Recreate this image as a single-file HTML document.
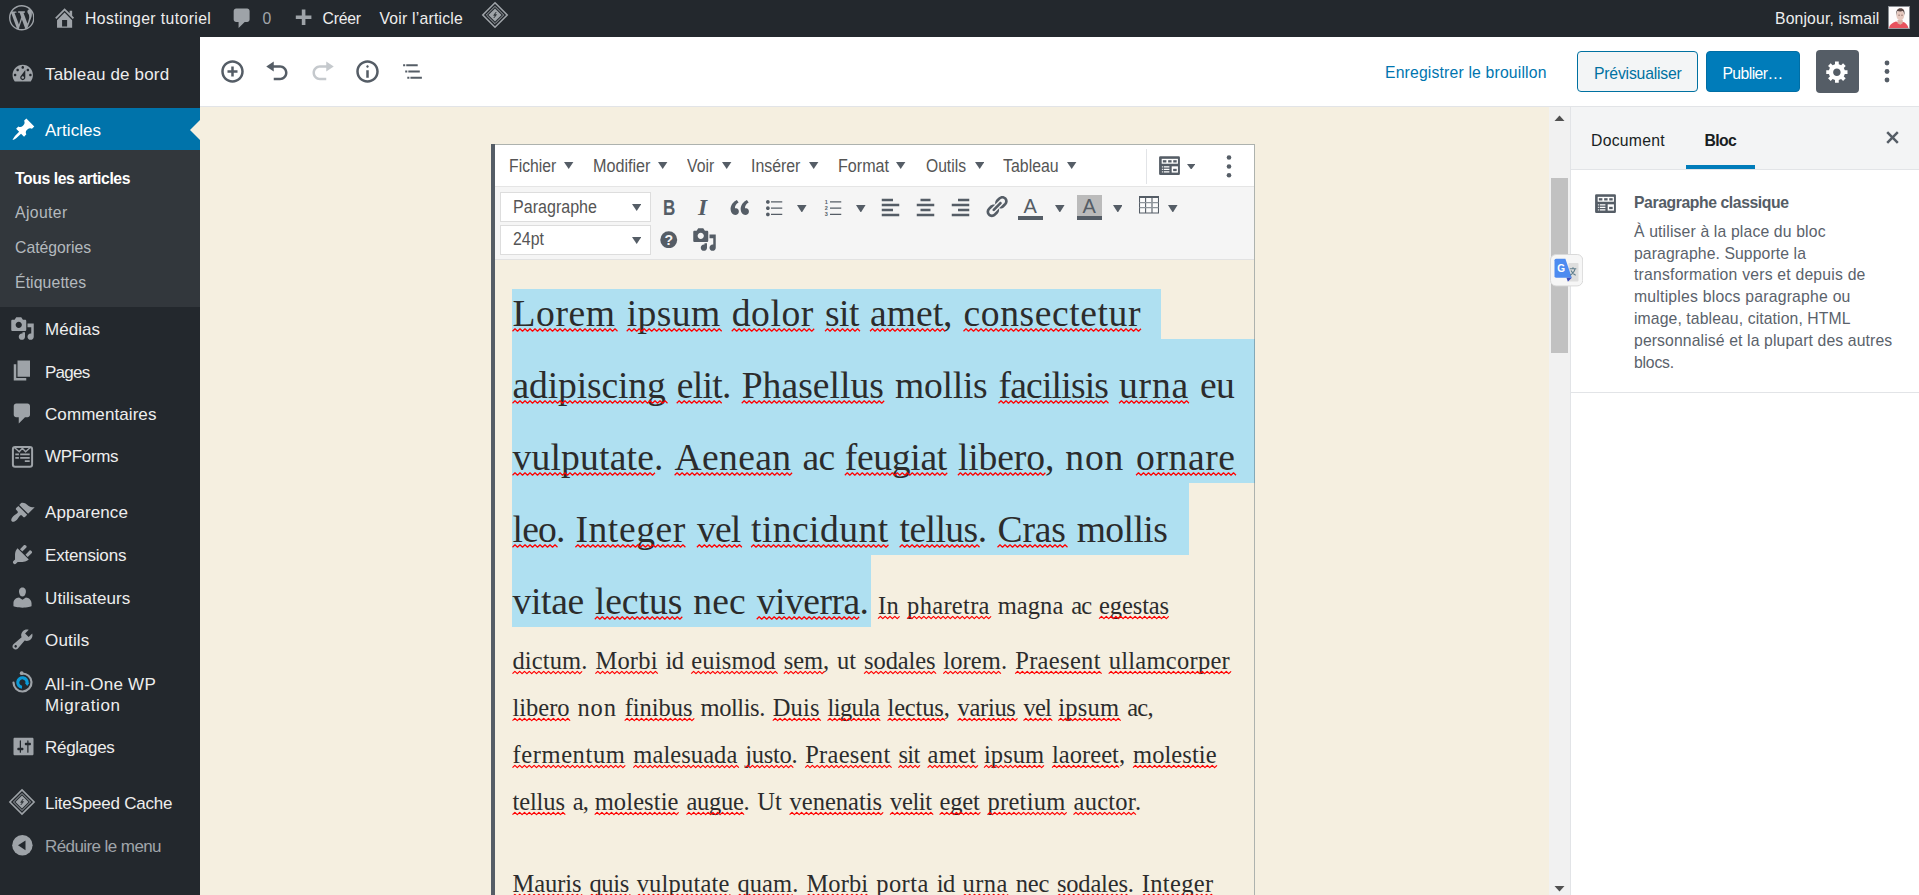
<!DOCTYPE html>
<html lang="fr"><head><meta charset="utf-8"><title>Modifier l’article ‹ Hostinger tutoriel — WordPress</title>
<style>
*{box-sizing:border-box;margin:0;padding:0}
html,body{width:1919px;height:895px;overflow:hidden;background:#f5efe0;font-family:"Liberation Sans",sans-serif}
.a{position:absolute;display:block}
.t{position:absolute;white-space:nowrap;line-height:1;font-size:16.25px}
.sq{text-decoration:none}

</style></head>
<body>
<div class="a" style="left:200px;top:107px;width:1350px;height:788px;background:#f5efe0;"></div>
<div class="a" style="left:0px;top:0px;width:1919px;height:37px;background:#23282d;"></div>
<svg class="a" style="left:8.5px;top:5px" width="25.5" height="25.5" viewBox="0 0 20 20"><path d="M20 10c0-5.51-4.49-10-10-10C4.48 0 0 4.49 0 10c0 5.52 4.48 10 10 10 5.51 0 10-4.48 10-10zM7.78 15.37L4.37 6.22c.55-.02 1.17-.08 1.17-.08.5-.06.44-1.13-.06-1.11 0 0-1.45.11-2.37.11-.18 0-.37 0-.58-.01C4.12 2.69 6.87 1.11 10 1.11c2.33 0 4.45.87 6.05 2.34-.68-.11-1.65.39-1.65 1.58 0 .74.45 1.36.9 2.1.35.61.55 1.36.55 2.46 0 1.49-1.4 5-1.4 5l-3.03-8.37c.54-.02.82-.17.82-.17.5-.05.44-1.25-.06-1.22 0 0-1.44.12-2.38.12-.87 0-2.33-.12-2.33-.12-.5-.03-.56 1.2-.06 1.22l.92.08 1.26 3.41zM17.41 10c.24-.64.74-1.87.43-4.25.7 1.29 1.05 2.71 1.05 4.25 0 3.29-1.73 6.24-4.4 7.78.97-2.59 1.94-5.2 2.92-7.78zM6.1 18.09C3.12 16.65 1.11 13.53 1.11 10c0-1.3.23-2.48.72-3.59C3.25 10.3 4.67 14.2 6.1 18.09zm4.03-6.63l2.58 6.98c-.86.29-1.76.45-2.71.45-.79 0-1.57-.11-2.29-.33.81-2.38 1.62-4.74 2.42-7.1z" fill="#9ea3a8"/></svg>
<svg class="a" style="left:52px;top:5px" width="25.2" height="25.2" viewBox="0 0 20 20"><path d="M16 8.5l1.53 1.53-1.06 1.06L10 4.62l-6.47 6.47-1.06-1.06L10 2.5l4 4v-2h2v4zm-6-2.46l6 5.99V18H4v-5.97zM12 17v-5H8v5h4z" fill="#9ea3a8"/></svg>
<svg class="a" style="left:229.5px;top:6px" width="24.5" height="24.5" viewBox="0 0 20 20"><path d="M5 2h9c1.1 0 2 .9 2 2v7c0 1.1-.9 2-2 2h-2l-5 5v-5H5c-1.1 0-2-.9-2-2V4c0-1.1.9-2 2-2z" fill="#9ea3a8"/></svg>
<svg class="a" style="left:291px;top:6.5px" width="24" height="24" viewBox="0 0 20 20"><path d="M17 7v3h-5v5H9v-5H4V7h5V2h3v5h5z" fill="#9ea3a8"/></svg>
<svg class="a" style="left:479.7px;top:0.40000000000000036px;" width="30" height="30" viewBox="-15 -15 30 30"><path d="M0 -12.2L12.2 0L0 12.2L-12.2 0Z" fill="none" stroke="#9ea3a8" stroke-width="1.6"/><path d="M0 -8.6L8.6 0L0 8.6L-8.6 0Z" fill="none" stroke="#9ea3a8" stroke-width="1"/><path d="M0 -6.6L6.6 0L0 6.6L-6.6 0Z" fill="#9ea3a8"/><path d="M1.2 -3L-1.4 0.4H0.6L-1.2 3L1.6 -0.4H-0.4Z" fill="#23282d" stroke="#23282d" stroke-width="0.5"/></svg>
<svg class="a" style="left:1888px;top:6px;" width="22" height="23.2" viewBox="0 0 22 23.200"><rect width="22" height="23.200" fill="#fdfcfc"/><path d="M1 22.200c.5-3.200 3.500-5.600 7-6.600l3.500 1.200l3-1c3 .8 5.200 3 6 6.400z" fill="#e8525d"/><path d="M9.500 14h5.200v3.200l-2.400 1.600l-2.800-1.600z" fill="#dbb3a6"/><ellipse cx="12.300" cy="9.300" rx="3.900" ry="5.100" fill="#e6c9bf"/><path d="M8.200 9.500c-.6-4.600 1.300-7.300 4.300-7.300s4.700 2.500 3.900 7.100c-.3-2.300-1-3.700-1.600-4.200c-1.500.5-3.700.5-5.200-.1c-.8.800-1.200 2.300-1.400 4.500z" fill="#5a4845"/><path d="M10.300 9.200h1.600M13.200 9.200h1.600" stroke="#7a5e58" stroke-width="0.800"/><rect x="0.500" y="0.500" width="21" height="22.200" fill="none" stroke="#8a8f94"/></svg>
<div class="a" style="left:0px;top:37px;width:200px;height:858px;background:#23282d;"></div>
<svg class="a" style="left:9.8px;top:60.8px" width="25.5" height="25.5" viewBox="0 0 20 20"><path d="M3.76 16h12.48c1.1-1.37 1.76-3.11 1.76-5 0-4.42-3.58-8-8-8s-8 3.58-8 8c0 1.89.66 3.63 1.76 5zM10 4c.55 0 1 .45 1 1s-.45 1-1 1-1-.45-1-1 .45-1 1-1zM6 6c.55 0 1 .45 1 1s-.45 1-1 1-1-.45-1-1 .45-1 1-1zm8 0c.55 0 1 .45 1 1s-.45 1-1 1-1-.45-1-1 .45-1 1-1zm-5.37 5.55L12 7v6c0 1.1-.9 2-2 2s-2-.9-2-2c0-.57.24-1.08.63-1.45zM4 10c.55 0 1 .45 1 1s-.45 1-1 1-1-.45-1-1 .45-1 1-1zm12 0c.55 0 1 .45 1 1s-.45 1-1 1-1-.45-1-1 .45-1 1-1zm-5 3c0-.55-.45-1-1-1s-1 .45-1 1 .45 1 1 1 1-.45 1-1z" fill="#9ea3a8"/></svg>
<div class="a" style="left:0px;top:108px;width:200px;height:42px;background:#0073aa;"></div>
<svg class="a" style="left:10.5px;top:117px" width="25" height="25" viewBox="0 0 20 20"><path d="M10.44 3.02l1.82-1.82 6.36 6.35-1.83 1.82c-1.05-.68-2.48-.57-3.41.36l-.75.75c-.92.93-1.04 2.35-.35 3.41l-1.83 1.82-2.41-2.41-2.8 2.79c-.42.42-3.38 2.71-3.8 2.29s1.86-3.39 2.28-3.81l2.79-2.79L4.1 9.36l1.83-1.82c1.05.69 2.48.57 3.4-.36l.75-.75c.93-.92 1.05-2.35.36-3.41z" fill="#fff"/></svg>
<svg class="a" style="left:190px;top:119.5px;" width="10" height="20" viewBox="0 0 10 20"><path d="M10 0L0 10L10 20Z" fill="#f5efe0"/></svg>
<div class="a" style="left:0px;top:150px;width:200px;height:157px;background:#32373c;"></div>
<svg class="a" style="left:10px;top:316px" width="25" height="25" viewBox="0 0 20 20"><path d="M13 11V4c0-.55-.45-1-1-1h-1.67L9 1H5L3.67 3H2c-.55 0-1 .45-1 1v7c0 .55.45 1 1 1h10c.55 0 1-.45 1-1zM7 4.5c1.38 0 2.5 1.12 2.5 2.5S8.38 9.5 7 9.5 4.5 8.38 4.5 7 5.62 4.5 7 4.5zM14 6h5v10.5c0 1.38-1.12 2.5-2.5 2.5S14 17.88 14 16.5s1.12-2.5 2.5-2.5c.17 0 .34.02.5.05V9h-3V6zm-4 8.05V13h2v3.5c0 1.38-1.12 2.5-2.5 2.5S7 17.88 7 16.5 8.12 14 9.5 14c.17 0 .34.02.5.05z" fill="#9ea3a8"/></svg>
<svg class="a" style="left:10px;top:358px" width="25" height="25" viewBox="0 0 20 20"><path d="M6 15V2h10v13H6zm-1 1h8v2H3V5h2v11z" fill="#9ea3a8"/></svg>
<svg class="a" style="left:10px;top:400.5px" width="25" height="25" viewBox="0 0 20 20"><path d="M5 2h9c1.1 0 2 .9 2 2v7c0 1.1-.9 2-2 2h-2l-5 5v-5H5c-1.1 0-2-.9-2-2V4c0-1.1.9-2 2-2z" fill="#9ea3a8"/></svg>
<svg class="a" style="left:10px;top:443.5px;" width="25" height="25" viewBox="0 0 25 25"><rect x="2.9" y="3.1" width="19.2" height="19.6" rx="2.2" fill="none" stroke="#9ea3a8" stroke-width="2"/><path d="M4.400 3.500L9.200 7.800L12.400 4.200L15.600 7.800L20.300 3.500" fill="none" stroke="#9ea3a8" stroke-width="1.4"/><path d="M5.300 10.300h3.600M10.200 10.300h9.500M5.300 13.800h3.600M10.200 13.800h9.500M14.800 17.100h4.900" stroke="#9ea3a8" stroke-width="1.700" fill="none"/></svg>
<svg class="a" style="left:10px;top:499.5px" width="25" height="25" viewBox="0 0 20 20"><path d="M14.48 11.06L7.41 3.99l1.5-1.5c.5-.56 2.3-.47 3.51.32 1.21.8 1.43 1.28 2.91 2.1 1.18.64 2.45 1.26 4.45.85zm-.71.71L6.7 4.7 4.93 6.47c-.39.39-.39 1.02 0 1.41l1.06 1.06c.39.39.39 1.03 0 1.42-.6.6-1.43 1.11-2.21 1.69-.35.26-.7.53-1.01.84C1.43 14.23.4 16.08 1.4 17.07c.99 1 2.84-.03 4.18-1.36.31-.31.58-.66.85-1.02.57-.78 1.08-1.61 1.69-2.21.39-.39 1.02-.39 1.41 0l1.06 1.06c.39.39 1.02.39 1.41 0z" fill="#9ea3a8"/></svg>
<svg class="a" style="left:10px;top:542px" width="25" height="25" viewBox="0 0 20 20"><path d="M13.11 4.36L9.87 7.6 8 5.73l3.24-3.24c.35-.34 1.05-.2 1.56.32.52.51.66 1.21.31 1.55zm-8 1.77l.91-1.12 9.01 9.01-1.19.84c-.71.71-2.63 1.16-3.82 1.16H6.14L4.9 17.26c-.59.59-1.54.59-2.12 0-.59-.58-.59-1.53 0-2.12l1.24-1.24v-3.88c0-1.13.4-3.19 1.09-3.89zm7.26 3.97l3.24-3.24c.34-.35 1.04-.21 1.55.31.52.51.66 1.21.31 1.55l-3.24 3.25z" fill="#9ea3a8"/></svg>
<svg class="a" style="left:10px;top:585px" width="25" height="25" viewBox="0 0 20 20"><path d="M10 9.25c-2.27 0-2.73-3.44-2.73-3.44C7 4.02 7.82 2 9.97 2c2.16 0 2.98 2.02 2.71 3.81 0 0-.41 3.44-2.68 3.44zm0 2.57L12.72 10c2.39 0 4.52 2.33 4.52 4.53v2.49s-3.65 1.13-7.24 1.13c-3.65 0-7.24-1.13-7.24-1.13v-2.49c0-2.25 1.94-4.48 4.47-4.48z" fill="#9ea3a8"/></svg>
<svg class="a" style="left:10px;top:627px" width="25" height="25" viewBox="0 0 20 20"><path d="M16.68 9.77c-1.34 1.34-3.3 1.67-4.95.99l-5.41 6.52c-.99.99-2.59.99-3.58 0s-.99-2.59 0-3.57l6.52-5.42c-.68-1.65-.35-3.61.99-4.95 1.28-1.28 3.12-1.62 4.72-1.06l-2.89 2.89 2.82 2.82 2.86-2.87c.53 1.58.18 3.39-1.08 4.65zM3.81 16.21c.4.39 1.04.39 1.43 0 .4-.4.4-1.04 0-1.43-.39-.4-1.03-.4-1.43 0-.39.39-.39 1.03 0 1.43z" fill="#9ea3a8"/></svg>
<svg class="a" style="left:10px;top:670px;" width="25" height="25" viewBox="-12.5 -12.5 25 25"><path d="M-0.600 -9A9 9 0 1 1 -9 0" fill="none" stroke="#9ea3a8" stroke-width="2.200" stroke-linecap="round"/><circle cx="-0.800" cy="-9.300" r="1.900" fill="#9ea3a8"/><path d="M-0.500 4.700A4.700 4.700 0 1 1 4.600 0.800" fill="none" stroke="#0c9ad6" stroke-width="3.100"/><path d="M2.200 0.200L7 0.200L4.700 3.600Z" fill="#0c9ad6"/></svg>
<svg class="a" style="left:10.5px;top:734px" width="25" height="25" viewBox="0 0 20 20"><path d="M18 16V4c0-.55-.45-1-1-1H3c-.55 0-1 .45-1 1v12c0 .55.45 1 1 1h14c.55 0 1-.45 1-1zM8 11h1c.55 0 1 .45 1 1s-.45 1-1 1H8v1.5c0 .28-.22.5-.5.5s-.5-.22-.5-.5V13H6c-.55 0-1-.45-1-1s.45-1 1-1h1V5.5c0-.28.22-.5.5-.5s.5.22.5.5V11zm5-2h-1c-.55 0-1-.45-1-1s.45-1 1-1h1V5.5c0-.28.22-.5.5-.5s.5.22.5.5V7h1c.55 0 1 .45 1 1s-.45 1-1 1h-1v5.5c0 .28-.22.5-.5.5s-.5-.22-.5-.5V9z" fill="#9ea3a8"/></svg>
<svg class="a" style="left:7.350000000000001px;top:787px;" width="30" height="30" viewBox="-15 -15 30 30"><path d="M0 -12.1L12.1 0L0 12.1L-12.1 0Z" fill="none" stroke="#9ea3a8" stroke-width="1.6"/><path d="M0 -8.5L8.5 0L0 8.5L-8.5 0Z" fill="none" stroke="#9ea3a8" stroke-width="1"/><path d="M0 -6.5L6.5 0L0 6.5L-6.5 0Z" fill="#9ea3a8"/><path d="M1.2 -3L-1.4 0.4H0.6L-1.2 3L1.6 -0.4H-0.4Z" fill="#23282d" stroke="#23282d" stroke-width="0.5"/></svg>
<svg class="a" style="left:12px;top:834.5px;" width="21" height="21" viewBox="0 0 21 21"><circle cx="10.400" cy="10.300" r="10.200" fill="#9ea3a8"/><path d="M13.500 5.400v9.800L6 10.300z" fill="#23282d"/></svg>
<div class="a" style="left:200px;top:37px;width:1719px;height:70px;background:#fff;border-bottom:1px solid #e2e4e7;"></div>
<svg class="a" style="left:219.5px;top:58.5px" width="25" height="25" viewBox="0 0 20 20"><path d="M10 1c-5 0-9 4-9 9s4 9 9 9 9-4 9-9-4-9-9-9zm0 16c-3.9 0-7-3.1-7-7s3.1-7 7-7 7 3.1 7 7-3.1 7-7 7zm1-11H9v3H6v2h3v3h2v-3h3V9h-3V6z" fill="#555d66"/></svg>
<svg class="a" style="left:264.5px;top:58.5px" width="25" height="25" viewBox="0 0 20 20"><path d="M12 5H7V2L1 6l6 4V7h5c2.2 0 4 1.8 4 4s-1.8 4-4 4H7v2h5c3.3 0 6-2.7 6-6s-2.7-6-6-6z" fill="#555d66"/></svg>
<svg class="a" style="left:310px;top:58.5px" width="25" height="25" viewBox="0 0 20 20"><path d="M8 5h5V2l6 4-6 4V7H8c-2.2 0-4 1.8-4 4s1.8 4 4 4h5v2H8c-3.3 0-6-2.700-6-6s2.700-6 6-6z" fill="#c5c9cd"/></svg>
<svg class="a" style="left:354.5px;top:58.5px" width="25" height="25" viewBox="0 0 20 20"><path d="M9 15h2V9H9v6zm1-10c-.5 0-1 .5-1 1s.5 1 1 1 1-.5 1-1-.5-1-1-1zm0-4c-5 0-9 4-9 9s4 9 9 9 9-4 9-9-4-9-9-9zm0 16c-3.9 0-7-3.1-7-7s3.1-7 7-7 7 3.1 7 7-3.1 7-7 7z" fill="#555d66"/></svg>
<svg class="a" style="left:400.3px;top:59px;" width="25" height="25" viewBox="0 0 24 24"><path d="M5 5H3v2h2V5zm3 8h11v-2H8v2zm9-8H6v2h11V5zM7 11H5v2h2v-2zm0 8h2v-2H7v2zm3-2v2h11v-2H10z" fill="#555d66"/></svg>
<div class="a" style="left:1577px;top:51px;width:121px;height:41px;background:#f3f5f6;border:1px solid #0071a1;border-radius:4px;"></div>
<div class="a" style="left:1706px;top:51px;width:94px;height:41px;background:#007cba;border:1px solid #006ea5;border-radius:4px;"></div>
<div class="a" style="left:1816px;top:50px;width:43px;height:43px;background:#555d66;border-radius:4px;"></div>
<svg class="a" style="left:1825px;top:59px" width="25" height="25" viewBox="0 0 20 20"><path d="M18 12h-2.18c-.17.7-.44 1.35-.81 1.93l1.54 1.54-2.1 2.1-1.54-1.54c-.58.36-1.23.63-1.91.79V19H8v-2.180c-.68-.16-1.33-.43-1.91-.79l-1.54 1.54-2.12-2.12 1.54-1.54c-.36-.58-.63-1.23-.79-1.91H1V9.030h2.170c.16-.7.44-1.35.8-1.940L2.430 5.550l2.100-2.100 1.540 1.540c.58-.37 1.24-.64 1.930-.81V2h3v2.180c.68.16 1.33.43 1.910.79l1.540-1.540 2.120 2.130-1.540 1.540c.36.59.64 1.24.8 1.930H18V12zm-8.500 1.500c1.660 0 3-1.340 3-3s-1.340-3-3-3-3 1.340-3 3 1.340 3 3 3z" fill="#fff"/></svg>
<svg class="a" style="left:1877px;top:56px;" width="20" height="30" viewBox="0 0 20 30"><circle cx="10" cy="7" r="2.400" fill="#555d66"/><circle cx="10" cy="15.500" r="2.400" fill="#555d66"/><circle cx="10" cy="24" r="2.400" fill="#555d66"/></svg>
<div class="a" style="left:1549px;top:107px;width:21px;height:788px;background:#f1f1f1;"></div>
<div class="a" style="left:1551px;top:178px;width:17px;height:175px;background:#c1c1c1;"></div>
<svg class="a" style="left:1554px;top:114px;" width="11" height="8" viewBox="0 0 11 8"><path d="M0.500 7L5.500 1.500L10.500 7Z" fill="#505050"/></svg>
<svg class="a" style="left:1554px;top:885px;" width="11" height="8" viewBox="0 0 11 8"><path d="M0.500 1L5.500 6.500L10.500 1Z" fill="#505050"/></svg>
<div class="a" style="left:1570px;top:107px;width:349px;height:788px;background:#fff;border-left:1px solid #e2e4e7;"></div>
<div class="a" style="left:1571px;top:107px;width:348px;height:63px;background:#f3f4f5;border-bottom:1px solid #e2e4e7;"></div>
<div class="a" style="left:1686px;top:165px;width:69px;height:4px;background:#007cba;"></div>
<svg class="a" style="left:1879.5px;top:125px" width="25" height="25" viewBox="0 0 20 20"><path d="M14.95 6.46L11.41 10l3.54 3.54-1.41 1.41L10 11.42l-3.53 3.53-1.42-1.42L8.58 10 5.05 6.47l1.42-1.42L10 8.580l3.540-3.530z" fill="#555d66"/></svg>
<svg class="a" style="left:1593px;top:191px;" width="25" height="25" viewBox="0 0 24 24"><rect x="2" y="3" width="20" height="18" rx="1.200" fill="#555d66"/><rect x="4.500" y="5.600" width="15.600" height="4.700" fill="#fff"/><rect x="5.600" y="6.900" width="3.400" height="2.200" fill="#555d66"/><rect x="10.700" y="6.900" width="3.300" height="2.200" fill="#555d66"/><rect x="15.600" y="6.900" width="3.300" height="2.200" fill="#555d66"/><path d="M4.700 12.800h.9v1.200h-.9zM6.500 12.800h5.400v1.200H6.500zM4.700 15.100h.9v1.200h-.9zM6.500 15.100h5.400v1.200H6.500zM4.700 17.600h.9v1.200h-.9zM6.500 17.600h5.400v1.200H6.500z" fill="#fff"/><rect x="14.100" y="12.800" width="6" height="6" fill="#fff"/><rect x="15.500" y="15.200" width="3.400" height="2.200" fill="#555d66"/></svg>
<div class="a" style="left:1571px;top:392px;width:348px;height:1px;background:#e2e4e7;"></div>
<svg class="a" style="left:1549.5px;top:254.2px;" width="33.2" height="32.4" viewBox="0 0 33.200 32.400"><rect x="0.500" y="0.500" width="32.200" height="31.400" rx="5.500" fill="#f6f6f6" stroke="#d9d9d9"/><rect x="18.400" y="9" width="10.100" height="18.400" rx="0.800" fill="#dedede"/><path d="M6 4.800H15.400L21.800 23.800H6a1.500 1.500 0 0 1-1.500-1.500V6.300a1.500 1.500 0 0 1 1.500-1.500z" fill="#4d8bf0"/><path d="M16.500 23.800H21.800L17.900 27.700z" fill="#3b4dbd"/><path d="M19.800 14.700h6.500M23 13.300v1.400M25.100 14.700c-.6 3-2.400 5-5 6.600M21 16.600c.9 2 2.500 3.600 4.700 4.700" stroke="#5f7d8c" stroke-width="1.100" fill="none"/></svg>
<div class="a" style="left:491px;top:144px;width:4px;height:751px;background:#555d66;"></div>
<div class="a" style="left:495px;top:144px;width:760px;height:751px;background:#f5efe0;"></div>
<div class="a" style="left:495px;top:145px;width:759px;height:41px;background:#fff;"></div>
<div class="a" style="left:495px;top:186px;width:759px;height:73px;background:#f5f5f5;border-top:1px solid #e5e5e5;"></div>
<div class="a" style="left:495px;top:259px;width:759px;height:1px;background:#e2e2e2;"></div>
<svg class="a" style="left:564.3px;top:162.3px;" width="9.4" height="6.9" viewBox="0 0 9.4 6.9"><path d="M0 0H9.4L4.7 6.9Z" fill="#555d66"/></svg>
<svg class="a" style="left:658.3px;top:162.3px;" width="9.4" height="6.9" viewBox="0 0 9.4 6.9"><path d="M0 0H9.4L4.7 6.9Z" fill="#555d66"/></svg>
<svg class="a" style="left:722.2px;top:162.3px;" width="9.4" height="6.9" viewBox="0 0 9.4 6.9"><path d="M0 0H9.4L4.7 6.9Z" fill="#555d66"/></svg>
<svg class="a" style="left:809.3px;top:162.3px;" width="9.4" height="6.9" viewBox="0 0 9.4 6.9"><path d="M0 0H9.4L4.7 6.9Z" fill="#555d66"/></svg>
<svg class="a" style="left:896.4px;top:162.3px;" width="9.4" height="6.9" viewBox="0 0 9.4 6.9"><path d="M0 0H9.4L4.7 6.9Z" fill="#555d66"/></svg>
<svg class="a" style="left:974.5px;top:162.3px;" width="9.4" height="6.9" viewBox="0 0 9.4 6.9"><path d="M0 0H9.4L4.7 6.9Z" fill="#555d66"/></svg>
<svg class="a" style="left:1067.2px;top:162.3px;" width="9.4" height="6.9" viewBox="0 0 9.4 6.9"><path d="M0 0H9.4L4.7 6.9Z" fill="#555d66"/></svg>
<div class="a" style="left:1146px;top:149px;width:1px;height:35px;background:#e2e4e7;"></div>
<svg class="a" style="left:1157px;top:153px;" width="25" height="25" viewBox="0 0 24 24"><rect x="2" y="3" width="20" height="18" rx="1.200" fill="#555d66"/><rect x="4.500" y="5.600" width="15.600" height="4.700" fill="#fff"/><rect x="5.600" y="6.900" width="3.400" height="2.200" fill="#555d66"/><rect x="10.700" y="6.900" width="3.300" height="2.200" fill="#555d66"/><rect x="15.600" y="6.900" width="3.300" height="2.200" fill="#555d66"/><path d="M4.700 12.800h.9v1.200h-.9zM6.500 12.800h5.400v1.200H6.500zM4.700 15.100h.9v1.200h-.9zM6.500 15.100h5.400v1.200H6.500zM4.700 17.600h.9v1.200h-.9zM6.500 17.600h5.400v1.200H6.500z" fill="#fff"/><rect x="14.100" y="12.800" width="6" height="6" fill="#fff"/><rect x="15.500" y="15.200" width="3.400" height="2.200" fill="#555d66"/></svg>
<svg class="a" style="left:1186.5px;top:163.5px;" width="8.4" height="5.6" viewBox="0 0 8.4 5.6"><path d="M0 0H8.4L4.2 5.6Z" fill="#555d66"/></svg>
<svg class="a" style="left:1224px;top:152px;" width="10" height="29" viewBox="0 0 10 29"><circle cx="5" cy="5.500" r="2.300" fill="#555d66"/><circle cx="5" cy="14.500" r="2.300" fill="#555d66"/><circle cx="5" cy="23.300" r="2.300" fill="#555d66"/></svg>
<div class="a" style="left:500px;top:192px;width:151px;height:30px;background:#fff;border:1px solid #ddd;"></div>
<svg class="a" style="left:632px;top:204.3px;" width="9.4" height="6.9" viewBox="0 0 9.4 6.9"><path d="M0 0H9.4L4.7 6.9Z" fill="#555d66"/></svg>
<div class="a" style="left:500px;top:225px;width:151px;height:30px;background:#fff;border:1px solid #ddd;"></div>
<svg class="a" style="left:632px;top:236.8px;" width="9.4" height="6.9" viewBox="0 0 9.4 6.9"><path d="M0 0H9.4L4.7 6.9Z" fill="#555d66"/></svg>
<svg class="a" style="left:726.5px;top:194.5px" width="25" height="25" viewBox="0 0 20 20"><path d="M9.49 13.22c0-.74-.2-1.38-.61-1.9-.62-.78-1.83-.88-2.53-.72-.29-1.65 1.11-3.75 2.92-4.65L7.88 4c-2.73 1.3-5.42 4.28-4.96 8.05C3.21 14.43 4.59 16 6.54 16c.85 0 1.56-.25 2.12-.75s.83-1.18.83-2.030zm8.050 0c0-.74-.2-1.38-.61-1.9-.63-.78-1.830-.88-2.530-.72-.29-1.650 1.110-3.750 2.920-4.650L15.930 4c-2.730 1.3-5.410 4.280-4.950 8.050.29 2.380 1.660 3.950 3.610 3.950.85 0 1.560-.25 2.120-.75s.830-1.180.830-2.030z" fill="#555d66"/></svg>
<svg class="a" style="left:761px;top:194.5px" width="25" height="25" viewBox="0 0 20 20"><path d="M5.5 7C4.67 7 4 6.33 4 5.5 4 4.68 4.67 4 5.5 4 6.32 4 7 4.68 7 5.5 7 6.33 6.32 7 5.5 7zM8 5h9v1H8V5zm-2.500 7c-.83 0-1.500-.67-1.500-1.500C4 9.680 4.670 9 5.500 9c.82 0 1.500.68 1.500 1.500 0 .83-.68 1.500-1.500 1.500zM8 10h9v1H8v-1zm-2.500 7c-.83 0-1.500-.67-1.500-1.500 0-.82.67-1.500 1.500-1.500.82 0 1.500.68 1.500 1.500 0 .83-.68 1.500-1.500 1.500zM8 15h9v1H8v-1z" fill="#555d66"/></svg>
<svg class="a" style="left:797px;top:204.5px;" width="9.6" height="7.6" viewBox="0 0 9.6 7.6"><path d="M0 0H9.6L4.8 7.6Z" fill="#555d66"/></svg>
<svg class="a" style="left:820px;top:194.5px;" width="25" height="25" viewBox="0 0 20 20"><path d="M8 5h9v1H8zM8 10h9v1H8zM8 15h9v1H8z" fill="#555d66"/><text x="3.700" y="7" font-family="Liberation Sans,sans-serif" font-size="4.400" font-weight="700" fill="#555d66">1</text><text x="3.700" y="12" font-family="Liberation Sans,sans-serif" font-size="4.400" font-weight="700" fill="#555d66">2</text><text x="3.700" y="17" font-family="Liberation Sans,sans-serif" font-size="4.400" font-weight="700" fill="#555d66">3</text></svg>
<svg class="a" style="left:856px;top:204.5px;" width="9.6" height="7.6" viewBox="0 0 9.6 7.6"><path d="M0 0H9.6L4.8 7.6Z" fill="#555d66"/></svg>
<svg class="a" style="left:878px;top:194.5px" width="25" height="25" viewBox="0 0 20 20"><path d="M12 5V3H3v2h9zm5 4V7H3v2h14zm-5 4v-2H3v2h9zm5 4v-2H3v2h14z" fill="#555d66"/></svg>
<svg class="a" style="left:913px;top:194.5px" width="25" height="25" viewBox="0 0 20 20"><path d="M14 5V3H6v2h8zm3 4V7H3v2h14zm-3 4v-2H6v2h8zm3 4v-2H3v2h14z" fill="#555d66"/></svg>
<svg class="a" style="left:948px;top:194.5px" width="25" height="25" viewBox="0 0 20 20"><path d="M17 5V3H8v2h9zm0 4V7H3v2h14zm0 4v-2H8v2h9zm0 4v-2H3v2h14z" fill="#555d66"/></svg>
<svg class="a" style="left:983.5px;top:194px" width="25" height="25" viewBox="0 0 20 20"><path d="M17.74 2.76c1.68 1.69 1.68 4.41 0 6.1l-1.53 1.52c-1.12 1.12-2.7 1.47-4.14 1.09l2.62-2.61.76-.77.76-.76c.84-.84.84-2.2 0-3.04-.84-.85-2.2-.85-3.04 0l-.77.76-3.38 3.38c-.37-1.44-.02-3.02 1.1-4.14l1.52-1.53c1.69-1.68 4.42-1.68 6.1 0zM8.59 13.43l5.340-5.340c.42-.42.42-1.1 0-1.520-.44-.43-1.130-.39-1.530 0l-5.330 5.340c-.42.42-.42 1.1 0 1.520.44.43 1.130.39 1.520 0zm-.76 2.290l4.140-4.150c.38 1.440.03 3.020-1.090 4.140l-1.520 1.530c-1.690 1.680-4.410 1.680-6.100 0-1.680-1.680-1.680-4.420 0-6.100l1.530-1.520c1.120-1.120 2.700-1.470 4.140-1.100l-4.140 4.150c-.85.84-.85 2.200 0 3.050.84.84 2.200.84 3.040 0z" fill="#555d66"/></svg>
<div class="a" style="left:1018px;top:216px;width:25px;height:3.5px;background:#555d66;"></div>
<svg class="a" style="left:1055px;top:204.5px;" width="9.6" height="7.6" viewBox="0 0 9.6 7.6"><path d="M0 0H9.6L4.8 7.6Z" fill="#555d66"/></svg>
<div class="a" style="left:1077px;top:194.75px;width:25px;height:24.5px;background:#bbb;"></div>
<div class="a" style="left:1077px;top:216px;width:25px;height:3.5px;background:#555d66;"></div>
<svg class="a" style="left:1112.7px;top:204.5px;" width="9.6" height="7.6" viewBox="0 0 9.6 7.6"><path d="M0 0H9.6L4.8 7.6Z" fill="#555d66"/></svg>
<svg class="a" style="left:1138.9px;top:196.1px;" width="20" height="17.6" viewBox="0 0 20 17.600"><rect x="0.500" y="1" width="19" height="16.100" fill="#fbfbfb"/><path d="M0 0h20v2H0z" fill="#555d66"/><path d="M0.500 1v16.100M19.500 1v16.100M6.600 1v16.100M13 1v16.100M0 17h20" stroke="#555d66" stroke-width="1.100" fill="none"/><path d="M0.500 6.750h19M0.500 11.700h19" stroke="#8f969c" stroke-width="1.250" fill="none"/></svg>
<svg class="a" style="left:1168px;top:204.5px;" width="9.6" height="7.6" viewBox="0 0 9.6 7.6"><path d="M0 0H9.6L4.8 7.6Z" fill="#555d66"/></svg>
<svg class="a" style="left:660px;top:230.5px;" width="17.5" height="17.5" viewBox="0 0 18 18"><circle cx="9" cy="9" r="8.700" fill="#555d66"/><text x="9" y="14.200" text-anchor="middle" font-family="Liberation Sans,sans-serif" font-size="14.500" font-weight="700" fill="#f5f5f5">?</text></svg>
<svg class="a" style="left:691.5px;top:226.5px" width="25" height="25" viewBox="0 0 20 20"><path d="M13 11V4c0-.55-.45-1-1-1h-1.67L9 1H5L3.67 3H2c-.55 0-1 .45-1 1v7c0 .55.45 1 1 1h10c.55 0 1-.45 1-1zM7 4.5c1.38 0 2.5 1.12 2.5 2.5S8.38 9.5 7 9.5 4.5 8.38 4.5 7 5.62 4.5 7 4.5zM14 6h5v10.5c0 1.38-1.12 2.5-2.5 2.5S14 17.88 14 16.5s1.12-2.5 2.5-2.5c.17 0 .34.02.5.05V9h-3V6zm-4 8.05V13h2v3.5c0 1.38-1.12 2.5-2.5 2.5S7 17.88 7 16.5 8.12 14 9.5 14c.17 0 .34.02.5.05z" fill="#555d66"/></svg>
<div class="a" style="left:512px;top:289px;width:649px;height:50px;background:#afe0f1;"></div>
<div class="a" style="left:512px;top:339px;width:743px;height:72px;background:#afe0f1;"></div>
<div class="a" style="left:512px;top:411px;width:743px;height:72px;background:#afe0f1;"></div>
<div class="a" style="left:512px;top:483px;width:677px;height:72px;background:#afe0f1;"></div>
<div class="a" style="left:512px;top:555px;width:359px;height:72px;background:#afe0f1;"></div>
<div class="a" style="left:495px;top:144px;width:760px;height:1px;background:rgba(66,88,99,.4);"></div>
<div class="a" style="left:1254px;top:145px;width:1px;height:750px;background:rgba(66,88,99,.4);"></div>
<span class="t" style="left:85.00px;top:11.00px;font-size:15.75px;color:#eee;letter-spacing:0.399px;">Hostinger tutoriel</span>
<span class="t" style="left:262.50px;top:11.00px;font-size:15.75px;color:#a0a5aa;letter-spacing:-0.516px;">0</span>
<span class="t" style="left:322.50px;top:11.00px;font-size:15.75px;color:#eee;letter-spacing:-0.228px;">Créer</span>
<span class="t" style="left:379.50px;top:11.00px;font-size:15.75px;color:#eee;letter-spacing:0.212px;">Voir l’article</span>
<span class="t" style="left:1775.00px;top:11.00px;font-size:15.75px;color:#eee;letter-spacing:0.139px;">Bonjour, ismail</span>
<span class="t" style="left:45.00px;top:66.00px;font-size:17px;color:#eee;letter-spacing:0.154px;">Tableau de bord</span>
<span class="t" style="left:45.00px;top:122.00px;font-size:17px;color:#fff;letter-spacing:0.033px;">Articles</span>
<span class="t" style="left:15.00px;top:171.00px;font-size:15.75px;color:#fff;font-weight:700;letter-spacing:-0.427px;">Tous les articles</span>
<span class="t" style="left:15.00px;top:205.00px;font-size:15.75px;color:#b4b9be;letter-spacing:0.371px;">Ajouter</span>
<span class="t" style="left:15.00px;top:240.00px;font-size:15.75px;color:#b4b9be;letter-spacing:0.008px;">Catégories</span>
<span class="t" style="left:15.00px;top:275.00px;font-size:15.75px;color:#b4b9be;letter-spacing:0.120px;">Étiquettes</span>
<span class="t" style="left:45.00px;top:321.00px;font-size:17px;color:#eee;letter-spacing:0.031px;">Médias</span>
<span class="t" style="left:45.00px;top:364.00px;font-size:17px;color:#eee;letter-spacing:-0.741px;">Pages</span>
<span class="t" style="left:45.00px;top:406.00px;font-size:17px;color:#eee;letter-spacing:0.079px;">Commentaires</span>
<span class="t" style="left:45.00px;top:448.00px;font-size:17px;color:#eee;letter-spacing:-0.321px;">WPForms</span>
<span class="t" style="left:45.00px;top:504.00px;font-size:17px;color:#eee;letter-spacing:0.085px;">Apparence</span>
<span class="t" style="left:45.00px;top:547.00px;font-size:17px;color:#eee;letter-spacing:-0.197px;">Extensions</span>
<span class="t" style="left:45.00px;top:590.00px;font-size:17px;color:#eee;letter-spacing:0.109px;">Utilisateurs</span>
<span class="t" style="left:45.00px;top:632.00px;font-size:17px;color:#eee;letter-spacing:0.172px;">Outils</span>
<span class="t" style="left:45.00px;top:676.00px;font-size:17px;color:#eee;letter-spacing:0.255px;">All-in-One WP</span>
<span class="t" style="left:45.00px;top:697.00px;font-size:17px;color:#eee;letter-spacing:0.642px;">Migration</span>
<span class="t" style="left:45.00px;top:739.00px;font-size:17px;color:#eee;letter-spacing:-0.291px;">Réglages</span>
<span class="t" style="left:45.00px;top:795.00px;font-size:17px;color:#eee;letter-spacing:-0.216px;">LiteSpeed Cache</span>
<span class="t" style="left:45.00px;top:838.00px;font-size:17px;color:#a0a5aa;letter-spacing:-0.583px;">Réduire le menu</span>
<span class="t" style="left:1385.00px;top:65.00px;font-size:15.75px;color:#0075af;letter-spacing:0.168px;">Enregistrer le brouillon</span>
<span class="t" style="left:1594.00px;top:66.00px;font-size:15.75px;color:#0071a1;letter-spacing:-0.197px;">Prévisualiser</span>
<span class="t" style="left:1722.40px;top:66.00px;font-size:15.75px;color:#fff;letter-spacing:-0.560px;">Publier…</span>
<span class="t" style="left:1591.00px;top:133.00px;font-size:15.75px;color:#191e23;letter-spacing:0.275px;">Document</span>
<span class="t" style="left:1704.60px;top:133.00px;font-size:15.75px;color:#191e23;font-weight:700;letter-spacing:-0.685px;">Bloc</span>
<span class="t" style="left:1634.00px;top:195.00px;font-size:15.75px;color:#555d66;font-weight:700;letter-spacing:-0.412px;">Paragraphe classique</span>
<span class="t" style="left:1634.00px;top:224.00px;font-size:15.75px;color:#5a626b;letter-spacing:0.150px;">À utiliser à la place du bloc</span>
<span class="t" style="left:1634.00px;top:246.00px;font-size:15.75px;color:#5a626b;letter-spacing:0.092px;">paragraphe. Supporte la</span>
<span class="t" style="left:1634.00px;top:267.00px;font-size:15.75px;color:#5a626b;letter-spacing:0.206px;">transformation vers et depuis de</span>
<span class="t" style="left:1634.00px;top:289.00px;font-size:15.75px;color:#5a626b;letter-spacing:0.223px;">multiples blocs paragraphe ou</span>
<span class="t" style="left:1634.00px;top:311.00px;font-size:15.75px;color:#5a626b;letter-spacing:0.100px;">image, tableau, citation, HTML</span>
<span class="t" style="left:1634.00px;top:333.00px;font-size:15.75px;color:#5a626b;letter-spacing:0.118px;">personnalisé et la plupart des autres</span>
<span class="t" style="left:1634.00px;top:355.00px;font-size:15.75px;color:#5a626b;letter-spacing:-0.193px;">blocs.</span>
<span class="t" style="left:1557.30px;top:264.00px;font-size:10px;color:#fff;font-weight:700;">G</span>
<span class="t" style="left:509.00px;top:158.00px;font-size:17.5px;color:#555;transform:scaleX(0.9007);transform-origin:0 0;">Fichier</span>
<span class="t" style="left:593.00px;top:158.00px;font-size:17.5px;color:#555;transform:scaleX(0.9237);transform-origin:0 0;">Modifier</span>
<span class="t" style="left:687.00px;top:158.00px;font-size:17.5px;color:#555;transform:scaleX(0.9020);transform-origin:0 0;">Voir</span>
<span class="t" style="left:751.30px;top:158.00px;font-size:17.5px;color:#555;transform:scaleX(0.9069);transform-origin:0 0;">Insérer</span>
<span class="t" style="left:837.75px;top:158.00px;font-size:17.5px;color:#555;transform:scaleX(0.9200);transform-origin:0 0;">Format</span>
<span class="t" style="left:926.25px;top:158.00px;font-size:17.5px;color:#555;transform:scaleX(0.8942);transform-origin:0 0;">Outils</span>
<span class="t" style="left:1003.30px;top:158.00px;font-size:17.5px;color:#555;transform:scaleX(0.9085);transform-origin:0 0;">Tableau</span>
<span class="t" style="left:512.50px;top:199.00px;font-size:17.5px;color:#555;transform:scaleX(0.9183);transform-origin:0 0;">Paragraphe</span>
<span class="t" style="left:512.50px;top:231.00px;font-size:17.5px;color:#555;transform:scaleX(0.9072);transform-origin:0 0;">24pt</span>
<span class="t" style="left:662.70px;top:197.00px;font-size:21.8px;color:#555d66;font-weight:700;transform:scaleX(0.7810);transform-origin:0 0;">B</span>
<span class="t" style="left:698.00px;top:196.00px;font-size:23.5px;color:#555d66;font-family:'Liberation Serif', serif;font-weight:700;font-style:italic;">I</span>
<span class="t" style="left:1023.50px;top:196.00px;font-size:20px;color:#555d66;">A</span>
<span class="t" style="left:1082.50px;top:196.00px;font-size:20px;color:#555d66;">A</span>
<span class="t" style="left:512.50px;top:295.00px;font-size:37.6px;color:#2c2c2c;font-family:'Liberation Serif', serif;letter-spacing:0.606px;"><u class="sq">Lorem</u></span>
<span class="t" style="left:626.70px;top:295.00px;font-size:37.6px;color:#2c2c2c;font-family:'Liberation Serif', serif;letter-spacing:0.425px;"><u class="sq">ipsum</u></span>
<span class="t" style="left:731.70px;top:295.00px;font-size:37.6px;color:#2c2c2c;font-family:'Liberation Serif', serif;letter-spacing:0.594px;"><u class="sq">dolor</u></span>
<span class="t" style="left:825.00px;top:295.00px;font-size:37.6px;color:#2c2c2c;font-family:'Liberation Serif', serif;letter-spacing:-0.505px;"><u class="sq">sit</u></span>
<span class="t" style="left:870.00px;top:295.00px;font-size:37.6px;color:#2c2c2c;font-family:'Liberation Serif', serif;letter-spacing:0.013px;"><u class="sq">amet</u>,</span>
<span class="t" style="left:963.50px;top:295.00px;font-size:37.6px;color:#2c2c2c;font-family:'Liberation Serif', serif;letter-spacing:0.581px;"><u class="sq">consectetur</u></span>
<span class="t" style="left:512.50px;top:367.00px;font-size:37.6px;color:#2c2c2c;font-family:'Liberation Serif', serif;letter-spacing:-0.127px;"><u class="sq">adipiscing</u></span>
<span class="t" style="left:676.70px;top:367.00px;font-size:37.6px;color:#2c2c2c;font-family:'Liberation Serif', serif;letter-spacing:-0.684px;"><u class="sq">elit</u>.</span>
<span class="t" style="left:741.70px;top:367.00px;font-size:37.6px;color:#2c2c2c;font-family:'Liberation Serif', serif;letter-spacing:0.037px;"><u class="sq">Phasellus</u></span>
<span class="t" style="left:895.00px;top:367.00px;font-size:37.6px;color:#2c2c2c;font-family:'Liberation Serif', serif;letter-spacing:-0.245px;">mollis</span>
<span class="t" style="left:998.50px;top:367.00px;font-size:37.6px;color:#2c2c2c;font-family:'Liberation Serif', serif;letter-spacing:-0.800px;"><u class="sq">facilisis</u></span>
<span class="t" style="left:1119.00px;top:367.00px;font-size:37.6px;color:#2c2c2c;font-family:'Liberation Serif', serif;letter-spacing:0.805px;"><u class="sq">urna</u></span>
<span class="t" style="left:1200.00px;top:367.00px;font-size:37.6px;color:#2c2c2c;font-family:'Liberation Serif', serif;letter-spacing:-0.800px;">eu</span>
<span class="t" style="left:512.50px;top:439.00px;font-size:37.6px;color:#2c2c2c;font-family:'Liberation Serif', serif;letter-spacing:0.185px;"><u class="sq">vulputate</u>.</span>
<span class="t" style="left:674.60px;top:439.00px;font-size:37.6px;color:#2c2c2c;font-family:'Liberation Serif', serif;letter-spacing:0.356px;"><u class="sq">Aenean</u></span>
<span class="t" style="left:802.50px;top:439.00px;font-size:37.6px;color:#2c2c2c;font-family:'Liberation Serif', serif;letter-spacing:-0.800px;">ac</span>
<span class="t" style="left:844.80px;top:439.00px;font-size:37.6px;color:#2c2c2c;font-family:'Liberation Serif', serif;letter-spacing:-0.321px;"><u class="sq">feugiat</u></span>
<span class="t" style="left:957.90px;top:439.00px;font-size:37.6px;color:#2c2c2c;font-family:'Liberation Serif', serif;letter-spacing:-0.109px;"><u class="sq">libero</u>,</span>
<span class="t" style="left:1065.20px;top:439.00px;font-size:37.6px;color:#2c2c2c;font-family:'Liberation Serif', serif;letter-spacing:0.900px;">non</span>
<span class="t" style="left:1136.00px;top:439.00px;font-size:37.6px;color:#2c2c2c;font-family:'Liberation Serif', serif;letter-spacing:0.605px;"><u class="sq">ornare</u></span>
<span class="t" style="left:512.50px;top:511.00px;font-size:37.6px;color:#2c2c2c;font-family:'Liberation Serif', serif;letter-spacing:-0.800px;"><u class="sq">leo</u>.</span>
<span class="t" style="left:575.40px;top:511.00px;font-size:37.6px;color:#2c2c2c;font-family:'Liberation Serif', serif;letter-spacing:0.585px;"><u class="sq">Integer</u></span>
<span class="t" style="left:696.90px;top:511.00px;font-size:37.6px;color:#2c2c2c;font-family:'Liberation Serif', serif;letter-spacing:-0.800px;"><u class="sq">vel</u></span>
<span class="t" style="left:751.00px;top:511.00px;font-size:37.6px;color:#2c2c2c;font-family:'Liberation Serif', serif;letter-spacing:0.443px;"><u class="sq">tincidunt</u></span>
<span class="t" style="left:899.60px;top:511.00px;font-size:37.6px;color:#2c2c2c;font-family:'Liberation Serif', serif;letter-spacing:-0.561px;"><u class="sq">tellus</u>.</span>
<span class="t" style="left:997.50px;top:511.00px;font-size:37.6px;color:#2c2c2c;font-family:'Liberation Serif', serif;letter-spacing:-0.173px;"><u class="sq">Cras</u></span>
<span class="t" style="left:1076.70px;top:511.00px;font-size:37.6px;color:#2c2c2c;font-family:'Liberation Serif', serif;letter-spacing:-0.561px;">mollis</span>
<span class="t" style="left:512.50px;top:583.00px;font-size:37.6px;color:#2c2c2c;font-family:'Liberation Serif', serif;letter-spacing:-0.346px;">vitae</span>
<span class="t" style="left:594.80px;top:583.00px;font-size:37.6px;color:#2c2c2c;font-family:'Liberation Serif', serif;letter-spacing:-0.026px;"><u class="sq">lectus</u></span>
<span class="t" style="left:693.30px;top:583.00px;font-size:37.6px;color:#2c2c2c;font-family:'Liberation Serif', serif;letter-spacing:0.081px;">nec</span>
<span class="t" style="left:756.70px;top:583.00px;font-size:37.6px;color:#2c2c2c;font-family:'Liberation Serif', serif;letter-spacing:-0.502px;"><u class="sq">viverra</u>.</span>
<span class="t" style="left:878.00px;top:594.00px;font-size:24.5px;color:#2c2c2c;font-family:'Liberation Serif', serif;letter-spacing:0.389px;"><u class="sq">In</u></span>
<span class="t" style="left:907.10px;top:594.00px;font-size:24.5px;color:#2c2c2c;font-family:'Liberation Serif', serif;letter-spacing:0.306px;"><u class="sq">pharetra</u></span>
<span class="t" style="left:997.70px;top:594.00px;font-size:24.5px;color:#2c2c2c;font-family:'Liberation Serif', serif;letter-spacing:0.077px;">magna</span>
<span class="t" style="left:1071.30px;top:594.00px;font-size:24.5px;color:#2c2c2c;font-family:'Liberation Serif', serif;letter-spacing:-0.800px;">ac</span>
<span class="t" style="left:1099.10px;top:594.00px;font-size:24.5px;color:#2c2c2c;font-family:'Liberation Serif', serif;letter-spacing:-0.121px;"><u class="sq">egestas</u></span>
<span class="t" style="left:512.50px;top:649.00px;font-size:24.5px;color:#2c2c2c;font-family:'Liberation Serif', serif;letter-spacing:0.118px;"><u class="sq">dictum</u>.</span>
<span class="t" style="left:595.40px;top:649.00px;font-size:24.5px;color:#2c2c2c;font-family:'Liberation Serif', serif;letter-spacing:0.210px;"><u class="sq">Morbi</u></span>
<span class="t" style="left:665.60px;top:649.00px;font-size:24.5px;color:#2c2c2c;font-family:'Liberation Serif', serif;letter-spacing:-0.656px;">id</span>
<span class="t" style="left:691.25px;top:649.00px;font-size:24.5px;color:#2c2c2c;font-family:'Liberation Serif', serif;letter-spacing:0.224px;"><u class="sq">euismod</u></span>
<span class="t" style="left:783.75px;top:649.00px;font-size:24.5px;color:#2c2c2c;font-family:'Liberation Serif', serif;letter-spacing:-0.061px;"><u class="sq">sem</u>,</span>
<span class="t" style="left:837.00px;top:649.00px;font-size:24.5px;color:#2c2c2c;font-family:'Liberation Serif', serif;letter-spacing:0.069px;">ut</span>
<span class="t" style="left:864.10px;top:649.00px;font-size:24.5px;color:#2c2c2c;font-family:'Liberation Serif', serif;letter-spacing:-0.118px;"><u class="sq">sodales</u></span>
<span class="t" style="left:943.30px;top:649.00px;font-size:24.5px;color:#2c2c2c;font-family:'Liberation Serif', serif;letter-spacing:0.120px;"><u class="sq">lorem</u>.</span>
<span class="t" style="left:1015.20px;top:649.00px;font-size:24.5px;color:#2c2c2c;font-family:'Liberation Serif', serif;letter-spacing:0.325px;"><u class="sq">Praesent</u></span>
<span class="t" style="left:1108.70px;top:649.00px;font-size:24.5px;color:#2c2c2c;font-family:'Liberation Serif', serif;letter-spacing:0.266px;"><u class="sq">ullamcorper</u></span>
<span class="t" style="left:512.50px;top:696.00px;font-size:24.5px;color:#2c2c2c;font-family:'Liberation Serif', serif;letter-spacing:-0.009px;"><u class="sq">libero</u></span>
<span class="t" style="left:577.50px;top:696.00px;font-size:24.5px;color:#2c2c2c;font-family:'Liberation Serif', serif;letter-spacing:0.850px;">non</span>
<span class="t" style="left:624.70px;top:696.00px;font-size:24.5px;color:#2c2c2c;font-family:'Liberation Serif', serif;letter-spacing:-0.023px;"><u class="sq">finibus</u></span>
<span class="t" style="left:700.50px;top:696.00px;font-size:24.5px;color:#2c2c2c;font-family:'Liberation Serif', serif;letter-spacing:-0.427px;">mollis.</span>
<span class="t" style="left:772.80px;top:696.00px;font-size:24.5px;color:#2c2c2c;font-family:'Liberation Serif', serif;letter-spacing:0.126px;"><u class="sq">Duis</u></span>
<span class="t" style="left:827.50px;top:696.00px;font-size:24.5px;color:#2c2c2c;font-family:'Liberation Serif', serif;letter-spacing:-0.616px;"><u class="sq">ligula</u></span>
<span class="t" style="left:887.50px;top:696.00px;font-size:24.5px;color:#2c2c2c;font-family:'Liberation Serif', serif;letter-spacing:-0.169px;"><u class="sq">lectus</u>,</span>
<span class="t" style="left:957.50px;top:696.00px;font-size:24.5px;color:#2c2c2c;font-family:'Liberation Serif', serif;letter-spacing:-0.296px;"><u class="sq">varius</u></span>
<span class="t" style="left:1023.50px;top:696.00px;font-size:24.5px;color:#2c2c2c;font-family:'Liberation Serif', serif;letter-spacing:-0.800px;"><u class="sq">vel</u></span>
<span class="t" style="left:1058.30px;top:696.00px;font-size:24.5px;color:#2c2c2c;font-family:'Liberation Serif', serif;letter-spacing:0.239px;"><u class="sq">ipsum</u></span>
<span class="t" style="left:1127.30px;top:696.00px;font-size:24.5px;color:#2c2c2c;font-family:'Liberation Serif', serif;letter-spacing:-0.800px;">ac,</span>
<span class="t" style="left:512.50px;top:743.00px;font-size:24.5px;color:#2c2c2c;font-family:'Liberation Serif', serif;letter-spacing:0.600px;"><u class="sq">fermentum</u></span>
<span class="t" style="left:633.30px;top:743.00px;font-size:24.5px;color:#2c2c2c;font-family:'Liberation Serif', serif;letter-spacing:0.077px;"><u class="sq">malesuada</u></span>
<span class="t" style="left:745.30px;top:743.00px;font-size:24.5px;color:#2c2c2c;font-family:'Liberation Serif', serif;letter-spacing:-0.297px;"><u class="sq">justo</u>.</span>
<span class="t" style="left:805.20px;top:743.00px;font-size:24.5px;color:#2c2c2c;font-family:'Liberation Serif', serif;letter-spacing:0.287px;"><u class="sq">Praesent</u></span>
<span class="t" style="left:898.40px;top:743.00px;font-size:24.5px;color:#2c2c2c;font-family:'Liberation Serif', serif;letter-spacing:-0.619px;"><u class="sq">sit</u></span>
<span class="t" style="left:927.60px;top:743.00px;font-size:24.5px;color:#2c2c2c;font-family:'Liberation Serif', serif;letter-spacing:0.219px;"><u class="sq">amet</u></span>
<span class="t" style="left:984.00px;top:743.00px;font-size:24.5px;color:#2c2c2c;font-family:'Liberation Serif', serif;letter-spacing:0.039px;"><u class="sq">ipsum</u></span>
<span class="t" style="left:1052.00px;top:743.00px;font-size:24.5px;color:#2c2c2c;font-family:'Liberation Serif', serif;letter-spacing:0.040px;"><u class="sq">laoreet</u>,</span>
<span class="t" style="left:1133.00px;top:743.00px;font-size:24.5px;color:#2c2c2c;font-family:'Liberation Serif', serif;letter-spacing:0.086px;"><u class="sq">molestie</u></span>
<span class="t" style="left:512.50px;top:790.00px;font-size:24.5px;color:#2c2c2c;font-family:'Liberation Serif', serif;letter-spacing:-0.132px;"><u class="sq">tellus</u></span>
<span class="t" style="left:572.70px;top:790.00px;font-size:24.5px;color:#2c2c2c;font-family:'Liberation Serif', serif;letter-spacing:-0.800px;">a,</span>
<span class="t" style="left:594.70px;top:790.00px;font-size:24.5px;color:#2c2c2c;font-family:'Liberation Serif', serif;letter-spacing:0.111px;"><u class="sq">molestie</u></span>
<span class="t" style="left:686.50px;top:790.00px;font-size:24.5px;color:#2c2c2c;font-family:'Liberation Serif', serif;letter-spacing:-0.288px;"><u class="sq">augue</u>.</span>
<span class="t" style="left:757.30px;top:790.00px;font-size:24.5px;color:#2c2c2c;font-family:'Liberation Serif', serif;letter-spacing:-0.050px;">Ut</span>
<span class="t" style="left:789.60px;top:790.00px;font-size:24.5px;color:#2c2c2c;font-family:'Liberation Serif', serif;letter-spacing:-0.003px;"><u class="sq">venenatis</u></span>
<span class="t" style="left:890.00px;top:790.00px;font-size:24.5px;color:#2c2c2c;font-family:'Liberation Serif', serif;letter-spacing:-0.369px;"><u class="sq">velit</u></span>
<span class="t" style="left:939.60px;top:790.00px;font-size:24.5px;color:#2c2c2c;font-family:'Liberation Serif', serif;letter-spacing:-0.203px;"><u class="sq">eget</u></span>
<span class="t" style="left:987.50px;top:790.00px;font-size:24.5px;color:#2c2c2c;font-family:'Liberation Serif', serif;letter-spacing:0.269px;"><u class="sq">pretium</u></span>
<span class="t" style="left:1073.50px;top:790.00px;font-size:24.5px;color:#2c2c2c;font-family:'Liberation Serif', serif;letter-spacing:0.257px;"><u class="sq">auctor</u>.</span>
<span class="t" style="left:512.50px;top:872.00px;font-size:24.5px;color:#2c2c2c;font-family:'Liberation Serif', serif;letter-spacing:-0.054px;"><u class="sq">Mauris</u></span>
<span class="t" style="left:589.50px;top:872.00px;font-size:24.5px;color:#2c2c2c;font-family:'Liberation Serif', serif;letter-spacing:-0.386px;"><u class="sq">quis</u></span>
<span class="t" style="left:636.70px;top:872.00px;font-size:24.5px;color:#2c2c2c;font-family:'Liberation Serif', serif;letter-spacing:0.181px;"><u class="sq">vulputate</u></span>
<span class="t" style="left:737.40px;top:872.00px;font-size:24.5px;color:#2c2c2c;font-family:'Liberation Serif', serif;letter-spacing:0.108px;"><u class="sq">quam</u>.</span>
<span class="t" style="left:806.40px;top:872.00px;font-size:24.5px;color:#2c2c2c;font-family:'Liberation Serif', serif;letter-spacing:0.130px;"><u class="sq">Morbi</u></span>
<span class="t" style="left:876.20px;top:872.00px;font-size:24.5px;color:#2c2c2c;font-family:'Liberation Serif', serif;letter-spacing:0.451px;">porta</span>
<span class="t" style="left:936.70px;top:872.00px;font-size:24.5px;color:#2c2c2c;font-family:'Liberation Serif', serif;letter-spacing:-0.581px;">id</span>
<span class="t" style="left:962.50px;top:872.00px;font-size:24.5px;color:#2c2c2c;font-family:'Liberation Serif', serif;letter-spacing:0.463px;"><u class="sq">urna</u></span>
<span class="t" style="left:1015.80px;top:872.00px;font-size:24.5px;color:#2c2c2c;font-family:'Liberation Serif', serif;letter-spacing:-0.267px;">nec</span>
<span class="t" style="left:1056.90px;top:872.00px;font-size:24.5px;color:#2c2c2c;font-family:'Liberation Serif', serif;letter-spacing:-0.169px;"><u class="sq">sodales</u>.</span>
<span class="t" style="left:1141.70px;top:872.00px;font-size:24.5px;color:#2c2c2c;font-family:'Liberation Serif', serif;letter-spacing:0.346px;"><u class="sq">Integer</u></span>
<svg class="a" style="left:0;top:0" width="1919" height="895" viewBox="0 0 1919 895"><path d="M512.5 331.2L515.0 328.8L517.5 331.2L520.0 328.8L522.5 331.2L525.0 328.8L527.5 331.2L530.0 328.8L532.5 331.2L535.0 328.8L537.5 331.2L540.0 328.8L542.5 331.2L545.0 328.8L547.5 331.2L550.0 328.8L552.5 331.2L555.0 328.8L557.5 331.2L560.0 328.8L562.5 331.2L565.0 328.8L567.5 331.2L570.0 328.8L572.5 331.2L575.0 328.8L577.5 331.2L580.0 328.8L582.5 331.2L585.0 328.8L587.5 331.2L590.0 328.8L592.5 331.2L595.0 328.8L597.5 331.2L600.0 328.8L602.5 331.2L605.0 328.8L607.5 331.2L610.0 328.8L612.5 331.2L615.0 328.8L617.5 331.2M626.7 331.2L629.2 328.8L631.7 331.2L634.2 328.8L636.7 331.2L639.2 328.8L641.7 331.2L644.2 328.8L646.7 331.2L649.2 328.8L651.7 331.2L654.2 328.8L656.7 331.2L659.2 328.8L661.7 331.2L664.2 328.8L666.7 331.2L669.2 328.8L671.7 331.2L674.2 328.8L676.7 331.2L679.2 328.8L681.7 331.2L684.2 328.8L686.7 331.2L689.2 328.8L691.7 331.2L694.2 328.8L696.7 331.2L699.2 328.8L701.7 331.2L704.2 328.8L706.7 331.2L709.2 328.8L711.7 331.2L714.2 328.8L716.7 331.2L719.2 328.8L721.7 331.2M731.7 331.2L734.2 328.8L736.7 331.2L739.2 328.8L741.7 331.2L744.2 328.8L746.7 331.2L749.2 328.8L751.7 331.2L754.2 328.8L756.7 331.2L759.2 328.8L761.7 331.2L764.2 328.8L766.7 331.2L769.2 328.8L771.7 331.2L774.2 328.8L776.7 331.2L779.2 328.8L781.7 331.2L784.2 328.8L786.7 331.2L789.2 328.8L791.7 331.2L794.2 328.8L796.7 331.2L799.2 328.8L801.7 331.2L804.2 328.8L806.7 331.2L809.2 328.8L811.7 331.2L814.2 328.8M825.0 331.2L827.5 328.8L830.0 331.2L832.5 328.8L835.0 331.2L837.5 328.8L840.0 331.2L842.5 328.8L845.0 331.2L847.5 328.8L850.0 331.2L852.5 328.8L855.0 331.2L857.5 328.8L860.0 331.2M870.0 331.2L872.5 328.8L875.0 331.2L877.5 328.8L880.0 331.2L882.5 328.8L885.0 331.2L887.5 328.8L890.0 331.2L892.5 328.8L895.0 331.2L897.5 328.8L900.0 331.2L902.5 328.8L905.0 331.2L907.5 328.8L910.0 331.2L912.5 328.8L915.0 331.2L917.5 328.8L920.0 331.2L922.5 328.8L925.0 331.2L927.5 328.8L930.0 331.2L932.5 328.8L935.0 331.2L937.5 328.8L940.0 331.2L942.5 328.8L945.0 331.2M963.5 331.2L966.0 328.8L968.5 331.2L971.0 328.8L973.5 331.2L976.0 328.8L978.5 331.2L981.0 328.8L983.5 331.2L986.0 328.8L988.5 331.2L991.0 328.8L993.5 331.2L996.0 328.8L998.5 331.2L1001.0 328.8L1003.5 331.2L1006.0 328.8L1008.5 331.2L1011.0 328.8L1013.5 331.2L1016.0 328.8L1018.5 331.2L1021.0 328.8L1023.5 331.2L1026.0 328.8L1028.5 331.2L1031.0 328.8L1033.5 331.2L1036.0 328.8L1038.5 331.2L1041.0 328.8L1043.5 331.2L1046.0 328.8L1048.5 331.2L1051.0 328.8L1053.5 331.2L1056.0 328.8L1058.5 331.2L1061.0 328.8L1063.5 331.2L1066.0 328.8L1068.5 331.2L1071.0 328.8L1073.5 331.2L1076.0 328.8L1078.5 331.2L1081.0 328.8L1083.5 331.2L1086.0 328.8L1088.5 331.2L1091.0 328.8L1093.5 331.2L1096.0 328.8L1098.5 331.2L1101.0 328.8L1103.5 331.2L1106.0 328.8L1108.5 331.2L1111.0 328.8L1113.5 331.2L1116.0 328.8L1118.5 331.2L1121.0 328.8L1123.5 331.2L1126.0 328.8L1128.5 331.2L1131.0 328.8L1133.5 331.2L1136.0 328.8L1138.5 331.2L1141.0 328.8M512.5 403.2L515.0 400.8L517.5 403.2L520.0 400.8L522.5 403.2L525.0 400.8L527.5 403.2L530.0 400.8L532.5 403.2L535.0 400.8L537.5 403.2L540.0 400.8L542.5 403.2L545.0 400.8L547.5 403.2L550.0 400.8L552.5 403.2L555.0 400.8L557.5 403.2L560.0 400.8L562.5 403.2L565.0 400.8L567.5 403.2L570.0 400.8L572.5 403.2L575.0 400.8L577.5 403.2L580.0 400.8L582.5 403.2L585.0 400.8L587.5 403.2L590.0 400.8L592.5 403.2L595.0 400.8L597.5 403.2L600.0 400.8L602.5 403.2L605.0 400.8L607.5 403.2L610.0 400.8L612.5 403.2L615.0 400.8L617.5 403.2L620.0 400.8L622.5 403.2L625.0 400.8L627.5 403.2L630.0 400.8L632.5 403.2L635.0 400.8L637.5 403.2L640.0 400.8L642.5 403.2L645.0 400.8L647.5 403.2L650.0 400.8L652.5 403.2L655.0 400.8L657.5 403.2L660.0 400.8L662.5 403.2L665.0 400.8L667.5 403.2M676.7 403.2L679.2 400.8L681.7 403.2L684.2 400.8L686.7 403.2L689.2 400.8L691.7 403.2L694.2 400.8L696.7 403.2L699.2 400.8L701.7 403.2L704.2 400.8L706.7 403.2L709.2 400.8L711.7 403.2L714.2 400.8L716.7 403.2L719.2 400.8L721.7 403.2M741.7 403.2L744.2 400.8L746.7 403.2L749.2 400.8L751.7 403.2L754.2 400.8L756.7 403.2L759.2 400.8L761.7 403.2L764.2 400.8L766.7 403.2L769.2 400.8L771.7 403.2L774.2 400.8L776.7 403.2L779.2 400.8L781.7 403.2L784.2 400.8L786.7 403.2L789.2 400.8L791.7 403.2L794.2 400.8L796.7 403.2L799.2 400.8L801.7 403.2L804.2 400.8L806.7 403.2L809.2 400.8L811.7 403.2L814.2 400.8L816.7 403.2L819.2 400.8L821.7 403.2L824.2 400.8L826.7 403.2L829.2 400.8L831.7 403.2L834.2 400.8L836.7 403.2L839.2 400.8L841.7 403.2L844.2 400.8L846.7 403.2L849.2 400.8L851.7 403.2L854.2 400.8L856.7 403.2L859.2 400.8L861.7 403.2L864.2 400.8L866.7 403.2L869.2 400.8L871.7 403.2L874.2 400.8L876.7 403.2L879.2 400.8L881.7 403.2L884.2 400.8M998.5 403.2L1001.0 400.8L1003.5 403.2L1006.0 400.8L1008.5 403.2L1011.0 400.8L1013.5 403.2L1016.0 400.8L1018.5 403.2L1021.0 400.8L1023.5 403.2L1026.0 400.8L1028.5 403.2L1031.0 400.8L1033.5 403.2L1036.0 400.8L1038.5 403.2L1041.0 400.8L1043.5 403.2L1046.0 400.8L1048.5 403.2L1051.0 400.8L1053.5 403.2L1056.0 400.8L1058.5 403.2L1061.0 400.8L1063.5 403.2L1066.0 400.8L1068.5 403.2L1071.0 400.8L1073.5 403.2L1076.0 400.8L1078.5 403.2L1081.0 400.8L1083.5 403.2L1086.0 400.8L1088.5 403.2L1091.0 400.8L1093.5 403.2L1096.0 400.8L1098.5 403.2L1101.0 400.8L1103.5 403.2L1106.0 400.8L1108.5 403.2M1119.0 403.2L1121.5 400.8L1124.0 403.2L1126.5 400.8L1129.0 403.2L1131.5 400.8L1134.0 403.2L1136.5 400.8L1139.0 403.2L1141.5 400.8L1144.0 403.2L1146.5 400.8L1149.0 403.2L1151.5 400.8L1154.0 403.2L1156.5 400.8L1159.0 403.2L1161.5 400.8L1164.0 403.2L1166.5 400.8L1169.0 403.2L1171.5 400.8L1174.0 403.2L1176.5 400.8L1179.0 403.2L1181.5 400.8L1184.0 403.2L1186.5 400.8L1189.0 403.2M512.5 475.2L515.0 472.8L517.5 475.2L520.0 472.8L522.5 475.2L525.0 472.8L527.5 475.2L530.0 472.8L532.5 475.2L535.0 472.8L537.5 475.2L540.0 472.8L542.5 475.2L545.0 472.8L547.5 475.2L550.0 472.8L552.5 475.2L555.0 472.8L557.5 475.2L560.0 472.8L562.5 475.2L565.0 472.8L567.5 475.2L570.0 472.8L572.5 475.2L575.0 472.8L577.5 475.2L580.0 472.8L582.5 475.2L585.0 472.8L587.5 475.2L590.0 472.8L592.5 475.2L595.0 472.8L597.5 475.2L600.0 472.8L602.5 475.2L605.0 472.8L607.5 475.2L610.0 472.8L612.5 475.2L615.0 472.8L617.5 475.2L620.0 472.8L622.5 475.2L625.0 472.8L627.5 475.2L630.0 472.8L632.5 475.2L635.0 472.8L637.5 475.2L640.0 472.8L642.5 475.2L645.0 472.8L647.5 475.2L650.0 472.8L652.5 475.2L655.0 472.8M674.6 475.2L677.1 472.8L679.6 475.2L682.1 472.8L684.6 475.2L687.1 472.8L689.6 475.2L692.1 472.8L694.6 475.2L697.1 472.8L699.6 475.2L702.1 472.8L704.6 475.2L707.1 472.8L709.6 475.2L712.1 472.8L714.6 475.2L717.1 472.8L719.6 475.2L722.1 472.8L724.6 475.2L727.1 472.8L729.6 475.2L732.1 472.8L734.6 475.2L737.1 472.8L739.6 475.2L742.1 472.8L744.6 475.2L747.1 472.8L749.6 475.2L752.1 472.8L754.6 475.2L757.1 472.8L759.6 475.2L762.1 472.8L764.6 475.2L767.1 472.8L769.6 475.2L772.1 472.8L774.6 475.2L777.1 472.8L779.6 475.2L782.1 472.8L784.6 475.2L787.1 472.8L789.6 475.2L792.1 472.8M844.8 475.2L847.3 472.8L849.8 475.2L852.3 472.8L854.8 475.2L857.3 472.8L859.8 475.2L862.3 472.8L864.8 475.2L867.3 472.8L869.8 475.2L872.3 472.8L874.8 475.2L877.3 472.8L879.8 475.2L882.3 472.8L884.8 475.2L887.3 472.8L889.8 475.2L892.3 472.8L894.8 475.2L897.3 472.8L899.8 475.2L902.3 472.8L904.8 475.2L907.3 472.8L909.8 475.2L912.3 472.8L914.8 475.2L917.3 472.8L919.8 475.2L922.3 472.8L924.8 475.2L927.3 472.8L929.8 475.2L932.3 472.8L934.8 475.2L937.3 472.8L939.8 475.2L942.3 472.8L944.8 475.2L947.3 472.8M957.9 475.2L960.4 472.8L962.9 475.2L965.4 472.8L967.9 475.2L970.4 472.8L972.9 475.2L975.4 472.8L977.9 475.2L980.4 472.8L982.9 475.2L985.4 472.8L987.9 475.2L990.4 472.8L992.9 475.2L995.4 472.8L997.9 475.2L1000.4 472.8L1002.9 475.2L1005.4 472.8L1007.9 475.2L1010.4 472.8L1012.9 475.2L1015.4 472.8L1017.9 475.2L1020.4 472.8L1022.9 475.2L1025.4 472.8L1027.9 475.2L1030.4 472.8L1032.9 475.2L1035.4 472.8L1037.9 475.2L1040.4 472.8L1042.9 475.2L1045.4 472.8M1136.0 475.2L1138.5 472.8L1141.0 475.2L1143.5 472.8L1146.0 475.2L1148.5 472.8L1151.0 475.2L1153.5 472.8L1156.0 475.2L1158.5 472.8L1161.0 475.2L1163.5 472.8L1166.0 475.2L1168.5 472.8L1171.0 475.2L1173.5 472.8L1176.0 475.2L1178.5 472.8L1181.0 475.2L1183.5 472.8L1186.0 475.2L1188.5 472.8L1191.0 475.2L1193.5 472.8L1196.0 475.2L1198.5 472.8L1201.0 475.2L1203.5 472.8L1206.0 475.2L1208.5 472.8L1211.0 475.2L1213.5 472.8L1216.0 475.2L1218.5 472.8L1221.0 475.2L1223.5 472.8L1226.0 475.2L1228.5 472.8L1231.0 475.2L1233.5 472.8L1236.0 475.2M512.5 547.2L515.0 544.8L517.5 547.2L520.0 544.8L522.5 547.2L525.0 544.8L527.5 547.2L530.0 544.8L532.5 547.2L535.0 544.8L537.5 547.2L540.0 544.8L542.5 547.2L545.0 544.8L547.5 547.2L550.0 544.8L552.5 547.2L555.0 544.8L557.5 547.2M575.4 547.2L577.9 544.8L580.4 547.2L582.9 544.8L585.4 547.2L587.9 544.8L590.4 547.2L592.9 544.8L595.4 547.2L597.9 544.8L600.4 547.2L602.9 544.8L605.4 547.2L607.9 544.8L610.4 547.2L612.9 544.8L615.4 547.2L617.9 544.8L620.4 547.2L622.9 544.8L625.4 547.2L627.9 544.8L630.4 547.2L632.9 544.8L635.4 547.2L637.9 544.8L640.4 547.2L642.9 544.8L645.4 547.2L647.9 544.8L650.4 547.2L652.9 544.8L655.4 547.2L657.9 544.8L660.4 547.2L662.9 544.8L665.4 547.2L667.9 544.8L670.4 547.2L672.9 544.8L675.4 547.2L677.9 544.8L680.4 547.2L682.9 544.8L685.4 547.2M696.9 547.2L699.4 544.8L701.9 547.2L704.4 544.8L706.9 547.2L709.4 544.8L711.9 547.2L714.4 544.8L716.9 547.2L719.4 544.8L721.9 547.2L724.4 544.8L726.9 547.2L729.4 544.8L731.9 547.2L734.4 544.8L736.9 547.2L739.4 544.8L741.9 547.2M751.0 547.2L753.5 544.8L756.0 547.2L758.5 544.8L761.0 547.2L763.5 544.8L766.0 547.2L768.5 544.8L771.0 547.2L773.5 544.8L776.0 547.2L778.5 544.8L781.0 547.2L783.5 544.8L786.0 547.2L788.5 544.8L791.0 547.2L793.5 544.8L796.0 547.2L798.5 544.8L801.0 547.2L803.5 544.8L806.0 547.2L808.5 544.8L811.0 547.2L813.5 544.8L816.0 547.2L818.5 544.8L821.0 547.2L823.5 544.8L826.0 547.2L828.5 544.8L831.0 547.2L833.5 544.8L836.0 547.2L838.5 544.8L841.0 547.2L843.5 544.8L846.0 547.2L848.5 544.8L851.0 547.2L853.5 544.8L856.0 547.2L858.5 544.8L861.0 547.2L863.5 544.8L866.0 547.2L868.5 544.8L871.0 547.2L873.5 544.8L876.0 547.2L878.5 544.8L881.0 547.2L883.5 544.8L886.0 547.2L888.5 544.8M899.6 547.2L902.1 544.8L904.6 547.2L907.1 544.8L909.6 547.2L912.1 544.8L914.6 547.2L917.1 544.8L919.6 547.2L922.1 544.8L924.6 547.2L927.1 544.8L929.6 547.2L932.1 544.8L934.6 547.2L937.1 544.8L939.6 547.2L942.1 544.8L944.6 547.2L947.1 544.8L949.6 547.2L952.1 544.8L954.6 547.2L957.1 544.8L959.6 547.2L962.1 544.8L964.6 547.2L967.1 544.8L969.6 547.2L972.1 544.8L974.6 547.2L977.1 544.8L979.6 547.2M997.5 547.2L1000.0 544.8L1002.5 547.2L1005.0 544.8L1007.5 547.2L1010.0 544.8L1012.5 547.2L1015.0 544.8L1017.5 547.2L1020.0 544.8L1022.5 547.2L1025.0 544.8L1027.5 547.2L1030.0 544.8L1032.5 547.2L1035.0 544.8L1037.5 547.2L1040.0 544.8L1042.5 547.2L1045.0 544.8L1047.5 547.2L1050.0 544.8L1052.5 547.2L1055.0 544.8L1057.5 547.2L1060.0 544.8L1062.5 547.2L1065.0 544.8L1067.5 547.2M594.8 619.2L597.3 616.8L599.8 619.2L602.3 616.8L604.8 619.2L607.3 616.8L609.8 619.2L612.3 616.8L614.8 619.2L617.3 616.8L619.8 619.2L622.3 616.8L624.8 619.2L627.3 616.8L629.8 619.2L632.3 616.8L634.8 619.2L637.3 616.8L639.8 619.2L642.3 616.8L644.8 619.2L647.3 616.8L649.8 619.2L652.3 616.8L654.8 619.2L657.3 616.8L659.8 619.2L662.3 616.8L664.8 619.2L667.3 616.8L669.8 619.2L672.3 616.8L674.8 619.2L677.3 616.8L679.8 619.2L682.3 616.8M756.7 619.2L759.2 616.8L761.7 619.2L764.2 616.8L766.7 619.2L769.2 616.8L771.7 619.2L774.2 616.8L776.7 619.2L779.2 616.8L781.7 619.2L784.2 616.8L786.7 619.2L789.2 616.8L791.7 619.2L794.2 616.8L796.7 619.2L799.2 616.8L801.7 619.2L804.2 616.8L806.7 619.2L809.2 616.8L811.7 619.2L814.2 616.8L816.7 619.2L819.2 616.8L821.7 619.2L824.2 616.8L826.7 619.2L829.2 616.8L831.7 619.2L834.2 616.8L836.7 619.2L839.2 616.8L841.7 619.2L844.2 616.8L846.7 619.2L849.2 616.8L851.7 619.2L854.2 616.8L856.7 619.2L859.2 616.8M878.0 618.6L880.4 616.4L882.8 618.6L885.2 616.4L887.6 618.6L890.0 616.4L892.4 618.6L894.8 616.4L897.2 618.6L899.6 616.4M907.1 618.6L909.5 616.4L911.9 618.6L914.3 616.4L916.7 618.6L919.1 616.4L921.5 618.6L923.9 616.4L926.3 618.6L928.7 616.4L931.1 618.6L933.5 616.4L935.9 618.6L938.3 616.4L940.7 618.6L943.1 616.4L945.5 618.6L947.9 616.4L950.3 618.6L952.7 616.4L955.1 618.6L957.5 616.4L959.9 618.6L962.3 616.4L964.7 618.6L967.1 616.4L969.5 618.6L971.9 616.4L974.3 618.6L976.7 616.4L979.1 618.6L981.5 616.4L983.9 618.6L986.3 616.4L988.7 618.6L991.1 616.4M1099.1 618.6L1101.5 616.4L1103.9 618.6L1106.3 616.4L1108.7 618.6L1111.1 616.4L1113.5 618.6L1115.9 616.4L1118.3 618.6L1120.7 616.4L1123.1 618.6L1125.5 616.4L1127.9 618.6L1130.3 616.4L1132.7 618.6L1135.1 616.4L1137.5 618.6L1139.9 616.4L1142.3 618.6L1144.7 616.4L1147.1 618.6L1149.5 616.4L1151.9 618.6L1154.3 616.4L1156.7 618.6L1159.1 616.4L1161.5 618.6L1163.9 616.4L1166.3 618.6L1168.7 616.4M512.5 673.6L514.9 671.4L517.3 673.6L519.7 671.4L522.1 673.6L524.5 671.4L526.9 673.6L529.3 671.4L531.7 673.6L534.1 671.4L536.5 673.6L538.9 671.4L541.3 673.6L543.7 671.4L546.1 673.6L548.5 671.4L550.9 673.6L553.3 671.4L555.7 673.6L558.1 671.4L560.5 673.6L562.9 671.4L565.3 673.6L567.7 671.4L570.1 673.6L572.5 671.4L574.9 673.6L577.3 671.4L579.7 673.6L582.1 671.4M595.4 673.6L597.8 671.4L600.2 673.6L602.6 671.4L605.0 673.6L607.4 671.4L609.8 673.6L612.2 671.4L614.6 673.6L617.0 671.4L619.4 673.6L621.8 671.4L624.2 673.6L626.6 671.4L629.0 673.6L631.4 671.4L633.8 673.6L636.2 671.4L638.6 673.6L641.0 671.4L643.4 673.6L645.8 671.4L648.2 673.6L650.6 671.4L653.0 673.6L655.4 671.4L657.8 673.6M691.2 673.6L693.6 671.4L696.0 673.6L698.4 671.4L700.8 673.6L703.2 671.4L705.6 673.6L708.0 671.4L710.4 673.6L712.8 671.4L715.2 673.6L717.6 671.4L720.0 673.6L722.4 671.4L724.8 673.6L727.2 671.4L729.6 673.6L732.0 671.4L734.4 673.6L736.8 671.4L739.2 673.6L741.6 671.4L744.0 673.6L746.4 671.4L748.8 673.6L751.2 671.4L753.6 673.6L756.0 671.4L758.4 673.6L760.8 671.4L763.2 673.6L765.6 671.4L768.0 673.6L770.4 671.4L772.8 673.6L775.2 671.4L777.6 673.6M783.8 673.6L786.1 671.4L788.5 673.6L790.9 671.4L793.3 673.6L795.7 671.4L798.1 673.6L800.5 671.4L802.9 673.6L805.3 671.4L807.7 673.6L810.1 671.4L812.5 673.6L814.9 671.4L817.3 673.6L819.7 671.4L822.1 673.6L824.5 671.4M864.1 673.6L866.5 671.4L868.9 673.6L871.3 671.4L873.7 673.6L876.1 671.4L878.5 673.6L880.9 671.4L883.3 673.6L885.7 671.4L888.1 673.6L890.5 671.4L892.9 673.6L895.3 671.4L897.7 673.6L900.1 671.4L902.5 673.6L904.9 671.4L907.3 673.6L909.7 671.4L912.1 673.6L914.5 671.4L916.9 673.6L919.3 671.4L921.7 673.6L924.1 671.4L926.5 673.6L928.9 671.4L931.3 673.6L933.7 671.4L936.1 673.6M943.3 673.6L945.7 671.4L948.1 673.6L950.5 671.4L952.9 673.6L955.3 671.4L957.7 673.6L960.1 671.4L962.5 673.6L964.9 671.4L967.3 673.6L969.7 671.4L972.1 673.6L974.5 671.4L976.9 673.6L979.3 671.4L981.7 673.6L984.1 671.4L986.5 673.6L988.9 671.4L991.3 673.6L993.7 671.4L996.1 673.6L998.5 671.4L1000.9 673.6M1015.2 673.6L1017.6 671.4L1020.0 673.6L1022.4 671.4L1024.8 673.6L1027.2 671.4L1029.6 673.6L1032.0 671.4L1034.4 673.6L1036.8 671.4L1039.2 673.6L1041.6 671.4L1044.0 673.6L1046.4 671.4L1048.8 673.6L1051.2 671.4L1053.6 673.6L1056.0 671.4L1058.4 673.6L1060.8 671.4L1063.2 673.6L1065.6 671.4L1068.0 673.6L1070.4 671.4L1072.8 673.6L1075.2 671.4L1077.6 673.6L1080.0 671.4L1082.4 673.6L1084.8 671.4L1087.2 673.6L1089.6 671.4L1092.0 673.6L1094.4 671.4L1096.8 673.6L1099.2 671.4L1101.6 673.6M1108.7 673.6L1111.1 671.4L1113.5 673.6L1115.9 671.4L1118.3 673.6L1120.7 671.4L1123.1 673.6L1125.5 671.4L1127.9 673.6L1130.3 671.4L1132.7 673.6L1135.1 671.4L1137.5 673.6L1139.9 671.4L1142.3 673.6L1144.7 671.4L1147.1 673.6L1149.5 671.4L1151.9 673.6L1154.3 671.4L1156.7 673.6L1159.1 671.4L1161.5 673.6L1163.9 671.4L1166.3 673.6L1168.7 671.4L1171.1 673.6L1173.5 671.4L1175.9 673.6L1178.3 671.4L1180.7 673.6L1183.1 671.4L1185.5 673.6L1187.9 671.4L1190.3 673.6L1192.7 671.4L1195.1 673.6L1197.5 671.4L1199.9 673.6L1202.3 671.4L1204.7 673.6L1207.1 671.4L1209.5 673.6L1211.9 671.4L1214.3 673.6L1216.7 671.4L1219.1 673.6L1221.5 671.4L1223.9 673.6L1226.3 671.4L1228.7 673.6L1231.1 671.4M512.5 720.6L514.9 718.4L517.3 720.6L519.7 718.4L522.1 720.6L524.5 718.4L526.9 720.6L529.3 718.4L531.7 720.6L534.1 718.4L536.5 720.6L538.9 718.4L541.3 720.6L543.7 718.4L546.1 720.6L548.5 718.4L550.9 720.6L553.3 718.4L555.7 720.6L558.1 718.4L560.5 720.6L562.9 718.4L565.3 720.6L567.7 718.4L570.1 720.6M624.7 720.6L627.1 718.4L629.5 720.6L631.9 718.4L634.3 720.6L636.7 718.4L639.1 720.6L641.5 718.4L643.9 720.6L646.3 718.4L648.7 720.6L651.1 718.4L653.5 720.6L655.9 718.4L658.3 720.6L660.7 718.4L663.1 720.6L665.5 718.4L667.9 720.6L670.3 718.4L672.7 720.6L675.1 718.4L677.5 720.6L679.9 718.4L682.3 720.6L684.7 718.4L687.1 720.6L689.5 718.4L691.9 720.6L694.3 718.4M772.8 720.6L775.2 718.4L777.6 720.6L780.0 718.4L782.4 720.6L784.8 718.4L787.2 720.6L789.6 718.4L792.0 720.6L794.4 718.4L796.8 720.6L799.2 718.4L801.6 720.6L804.0 718.4L806.4 720.6L808.8 718.4L811.2 720.6L813.6 718.4L816.0 720.6L818.4 718.4L820.8 720.6M827.5 720.6L829.9 718.4L832.3 720.6L834.7 718.4L837.1 720.6L839.5 718.4L841.9 720.6L844.3 718.4L846.7 720.6L849.1 718.4L851.5 720.6L853.9 718.4L856.3 720.6L858.7 718.4L861.1 720.6L863.5 718.4L865.9 720.6L868.3 718.4L870.7 720.6L873.1 718.4L875.5 720.6L877.9 718.4L880.3 720.6M887.5 720.6L889.9 718.4L892.3 720.6L894.7 718.4L897.1 720.6L899.5 718.4L901.9 720.6L904.3 718.4L906.7 720.6L909.1 718.4L911.5 720.6L913.9 718.4L916.3 720.6L918.7 718.4L921.1 720.6L923.5 718.4L925.9 720.6L928.3 718.4L930.7 720.6L933.1 718.4L935.5 720.6L937.9 718.4L940.3 720.6L942.7 718.4L945.1 720.6M957.5 720.6L959.9 718.4L962.3 720.6L964.7 718.4L967.1 720.6L969.5 718.4L971.9 720.6L974.3 718.4L976.7 720.6L979.1 718.4L981.5 720.6L983.9 718.4L986.3 720.6L988.7 718.4L991.1 720.6L993.5 718.4L995.9 720.6L998.3 718.4L1000.7 720.6L1003.1 718.4L1005.5 720.6L1007.9 718.4L1010.3 720.6L1012.7 718.4L1015.1 720.6L1017.5 718.4M1023.5 720.6L1025.9 718.4L1028.3 720.6L1030.7 718.4L1033.1 720.6L1035.5 718.4L1037.9 720.6L1040.3 718.4L1042.7 720.6L1045.1 718.4L1047.5 720.6L1049.9 718.4L1052.3 720.6M1058.3 720.6L1060.7 718.4L1063.1 720.6L1065.5 718.4L1067.9 720.6L1070.3 718.4L1072.7 720.6L1075.1 718.4L1077.5 720.6L1079.9 718.4L1082.3 720.6L1084.7 718.4L1087.1 720.6L1089.5 718.4L1091.9 720.6L1094.3 718.4L1096.7 720.6L1099.1 718.4L1101.5 720.6L1103.9 718.4L1106.3 720.6L1108.7 718.4L1111.1 720.6L1113.5 718.4L1115.9 720.6L1118.3 718.4L1120.7 720.6M512.5 767.6L514.9 765.4L517.3 767.6L519.7 765.4L522.1 767.6L524.5 765.4L526.9 767.6L529.3 765.4L531.7 767.6L534.1 765.4L536.5 767.6L538.9 765.4L541.3 767.6L543.7 765.4L546.1 767.6L548.5 765.4L550.9 767.6L553.3 765.4L555.7 767.6L558.1 765.4L560.5 767.6L562.9 765.4L565.3 767.6L567.7 765.4L570.1 767.6L572.5 765.4L574.9 767.6L577.3 765.4L579.7 767.6L582.1 765.4L584.5 767.6L586.9 765.4L589.3 767.6L591.7 765.4L594.1 767.6L596.5 765.4L598.9 767.6L601.3 765.4L603.7 767.6L606.1 765.4L608.5 767.6L610.9 765.4L613.3 767.6L615.7 765.4L618.1 767.6L620.5 765.4L622.9 767.6L625.3 765.4M633.3 767.6L635.7 765.4L638.1 767.6L640.5 765.4L642.9 767.6L645.3 765.4L647.7 767.6L650.1 765.4L652.5 767.6L654.9 765.4L657.3 767.6L659.7 765.4L662.1 767.6L664.5 765.4L666.9 767.6L669.3 765.4L671.7 767.6L674.1 765.4L676.5 767.6L678.9 765.4L681.3 767.6L683.7 765.4L686.1 767.6L688.5 765.4L690.9 767.6L693.3 765.4L695.7 767.6L698.1 765.4L700.5 767.6L702.9 765.4L705.3 767.6L707.7 765.4L710.1 767.6L712.5 765.4L714.9 767.6L717.3 765.4L719.7 767.6L722.1 765.4L724.5 767.6L726.9 765.4L729.3 767.6L731.7 765.4L734.1 767.6L736.5 765.4L738.9 767.6M745.3 767.6L747.7 765.4L750.1 767.6L752.5 765.4L754.9 767.6L757.3 765.4L759.7 767.6L762.1 765.4L764.5 767.6L766.9 765.4L769.3 767.6L771.7 765.4L774.1 767.6L776.5 765.4L778.9 767.6L781.3 765.4L783.7 767.6L786.1 765.4L788.5 767.6L790.9 765.4L793.3 767.6M805.2 767.6L807.6 765.4L810.0 767.6L812.4 765.4L814.8 767.6L817.2 765.4L819.6 767.6L822.0 765.4L824.4 767.6L826.8 765.4L829.2 767.6L831.6 765.4L834.0 767.6L836.4 765.4L838.8 767.6L841.2 765.4L843.6 767.6L846.0 765.4L848.4 767.6L850.8 765.4L853.2 767.6L855.6 765.4L858.0 767.6L860.4 765.4L862.8 767.6L865.2 765.4L867.6 767.6L870.0 765.4L872.4 767.6L874.8 765.4L877.2 767.6L879.6 765.4L882.0 767.6L884.4 765.4L886.8 767.6L889.2 765.4L891.6 767.6M898.4 767.6L900.8 765.4L903.2 767.6L905.6 765.4L908.0 767.6L910.4 765.4L912.8 767.6L915.2 765.4L917.6 767.6L920.0 765.4M927.6 767.6L930.0 765.4L932.4 767.6L934.8 765.4L937.2 767.6L939.6 765.4L942.0 767.6L944.4 765.4L946.8 767.6L949.2 765.4L951.6 767.6L954.0 765.4L956.4 767.6L958.8 765.4L961.2 767.6L963.6 765.4L966.0 767.6L968.4 765.4L970.8 767.6L973.2 765.4L975.6 767.6L978.0 765.4M984.0 767.6L986.4 765.4L988.8 767.6L991.2 765.4L993.6 767.6L996.0 765.4L998.4 767.6L1000.8 765.4L1003.2 767.6L1005.6 765.4L1008.0 767.6L1010.4 765.4L1012.8 767.6L1015.2 765.4L1017.6 767.6L1020.0 765.4L1022.4 767.6L1024.8 765.4L1027.2 767.6L1029.6 765.4L1032.0 767.6L1034.4 765.4L1036.8 767.6L1039.2 765.4L1041.6 767.6L1044.0 765.4M1052.0 767.6L1054.4 765.4L1056.8 767.6L1059.2 765.4L1061.6 767.6L1064.0 765.4L1066.4 767.6L1068.8 765.4L1071.2 767.6L1073.6 765.4L1076.0 767.6L1078.4 765.4L1080.8 767.6L1083.2 765.4L1085.6 767.6L1088.0 765.4L1090.4 767.6L1092.8 765.4L1095.2 767.6L1097.6 765.4L1100.0 767.6L1102.4 765.4L1104.8 767.6L1107.2 765.4L1109.6 767.6L1112.0 765.4L1114.4 767.6L1116.8 765.4L1119.2 767.6M1133.0 767.6L1135.4 765.4L1137.8 767.6L1140.2 765.4L1142.6 767.6L1145.0 765.4L1147.4 767.6L1149.8 765.4L1152.2 767.6L1154.6 765.4L1157.0 767.6L1159.4 765.4L1161.8 767.6L1164.2 765.4L1166.6 767.6L1169.0 765.4L1171.4 767.6L1173.8 765.4L1176.2 767.6L1178.6 765.4L1181.0 767.6L1183.4 765.4L1185.8 767.6L1188.2 765.4L1190.6 767.6L1193.0 765.4L1195.4 767.6L1197.8 765.4L1200.2 767.6L1202.6 765.4L1205.0 767.6L1207.4 765.4L1209.8 767.6L1212.2 765.4L1214.6 767.6L1217.0 765.4M512.5 814.6L514.9 812.4L517.3 814.6L519.7 812.4L522.1 814.6L524.5 812.4L526.9 814.6L529.3 812.4L531.7 814.6L534.1 812.4L536.5 814.6L538.9 812.4L541.3 814.6L543.7 812.4L546.1 814.6L548.5 812.4L550.9 814.6L553.3 812.4L555.7 814.6L558.1 812.4L560.5 814.6L562.9 812.4L565.3 814.6M594.7 814.6L597.1 812.4L599.5 814.6L601.9 812.4L604.3 814.6L606.7 812.4L609.1 814.6L611.5 812.4L613.9 814.6L616.3 812.4L618.7 814.6L621.1 812.4L623.5 814.6L625.9 812.4L628.3 814.6L630.7 812.4L633.1 814.6L635.5 812.4L637.9 814.6L640.3 812.4L642.7 814.6L645.1 812.4L647.5 814.6L649.9 812.4L652.3 814.6L654.7 812.4L657.1 814.6L659.5 812.4L661.9 814.6L664.3 812.4L666.7 814.6L669.1 812.4L671.5 814.6L673.9 812.4L676.3 814.6L678.7 812.4M686.5 814.6L688.9 812.4L691.3 814.6L693.7 812.4L696.1 814.6L698.5 812.4L700.9 814.6L703.3 812.4L705.7 814.6L708.1 812.4L710.5 814.6L712.9 812.4L715.3 814.6L717.7 812.4L720.1 814.6L722.5 812.4L724.9 814.6L727.3 812.4L729.7 814.6L732.1 812.4L734.5 814.6L736.9 812.4L739.3 814.6L741.7 812.4L744.1 814.6M789.6 814.6L792.0 812.4L794.4 814.6L796.8 812.4L799.2 814.6L801.6 812.4L804.0 814.6L806.4 812.4L808.8 814.6L811.2 812.4L813.6 814.6L816.0 812.4L818.4 814.6L820.8 812.4L823.2 814.6L825.6 812.4L828.0 814.6L830.4 812.4L832.8 814.6L835.2 812.4L837.6 814.6L840.0 812.4L842.4 814.6L844.8 812.4L847.2 814.6L849.6 812.4L852.0 814.6L854.4 812.4L856.8 814.6L859.2 812.4L861.6 814.6L864.0 812.4L866.4 814.6L868.8 812.4L871.2 814.6L873.6 812.4L876.0 814.6L878.4 812.4L880.8 814.6L883.2 812.4M890.0 814.6L892.4 812.4L894.8 814.6L897.2 812.4L899.6 814.6L902.0 812.4L904.4 814.6L906.8 812.4L909.2 814.6L911.6 812.4L914.0 814.6L916.4 812.4L918.8 814.6L921.2 812.4L923.6 814.6L926.0 812.4L928.4 814.6L930.8 812.4L933.2 814.6M939.6 814.6L942.0 812.4L944.4 814.6L946.8 812.4L949.2 814.6L951.6 812.4L954.0 814.6L956.4 812.4L958.8 814.6L961.2 812.4L963.6 814.6L966.0 812.4L968.4 814.6L970.8 812.4L973.2 814.6L975.6 812.4L978.0 814.6L980.4 812.4M987.5 814.6L989.9 812.4L992.3 814.6L994.7 812.4L997.1 814.6L999.5 812.4L1001.9 814.6L1004.3 812.4L1006.7 814.6L1009.1 812.4L1011.5 814.6L1013.9 812.4L1016.3 814.6L1018.7 812.4L1021.1 814.6L1023.5 812.4L1025.9 814.6L1028.3 812.4L1030.7 814.6L1033.1 812.4L1035.5 814.6L1037.9 812.4L1040.3 814.6L1042.7 812.4L1045.1 814.6L1047.5 812.4L1049.9 814.6L1052.3 812.4L1054.7 814.6L1057.1 812.4L1059.5 814.6L1061.9 812.4L1064.3 814.6L1066.7 812.4M1073.5 814.6L1075.9 812.4L1078.3 814.6L1080.7 812.4L1083.1 814.6L1085.5 812.4L1087.9 814.6L1090.3 812.4L1092.7 814.6L1095.1 812.4L1097.5 814.6L1099.9 812.4L1102.3 814.6L1104.7 812.4L1107.1 814.6L1109.5 812.4L1111.9 814.6L1114.3 812.4L1116.7 814.6L1119.1 812.4L1121.5 814.6L1123.9 812.4L1126.3 814.6L1128.7 812.4L1131.1 814.6L1133.5 812.4L1135.9 814.6M512.5 896.6L514.9 894.4L517.3 896.6L519.7 894.4L522.1 896.6L524.5 894.4L526.9 896.6L529.3 894.4L531.7 896.6L534.1 894.4L536.5 896.6L538.9 894.4L541.3 896.6L543.7 894.4L546.1 896.6L548.5 894.4L550.9 896.6L553.3 894.4L555.7 896.6L558.1 894.4L560.5 896.6L562.9 894.4L565.3 896.6L567.7 894.4L570.1 896.6L572.5 894.4L574.9 896.6L577.3 894.4L579.7 896.6L582.1 894.4M589.5 896.6L591.9 894.4L594.3 896.6L596.7 894.4L599.1 896.6L601.5 894.4L603.9 896.6L606.3 894.4L608.7 896.6L611.1 894.4L613.5 896.6L615.9 894.4L618.3 896.6L620.7 894.4L623.1 896.6L625.5 894.4L627.9 896.6L630.3 894.4M636.7 896.6L639.1 894.4L641.5 896.6L643.9 894.4L646.3 896.6L648.7 894.4L651.1 896.6L653.5 894.4L655.9 896.6L658.3 894.4L660.7 896.6L663.1 894.4L665.5 896.6L667.9 894.4L670.3 896.6L672.7 894.4L675.1 896.6L677.5 894.4L679.9 896.6L682.3 894.4L684.7 896.6L687.1 894.4L689.5 896.6L691.9 894.4L694.3 896.6L696.7 894.4L699.1 896.6L701.5 894.4L703.9 896.6L706.3 894.4L708.7 896.6L711.1 894.4L713.5 896.6L715.9 894.4L718.3 896.6L720.7 894.4L723.1 896.6L725.5 894.4L727.9 896.6L730.3 894.4M737.4 896.6L739.8 894.4L742.2 896.6L744.6 894.4L747.0 896.6L749.4 894.4L751.8 896.6L754.2 894.4L756.6 896.6L759.0 894.4L761.4 896.6L763.8 894.4L766.2 896.6L768.6 894.4L771.0 896.6L773.4 894.4L775.8 896.6L778.2 894.4L780.6 896.6L783.0 894.4L785.4 896.6L787.8 894.4L790.2 896.6L792.6 894.4M806.4 896.6L808.8 894.4L811.2 896.6L813.6 894.4L816.0 896.6L818.4 894.4L820.8 896.6L823.2 894.4L825.6 896.6L828.0 894.4L830.4 896.6L832.8 894.4L835.2 896.6L837.6 894.4L840.0 896.6L842.4 894.4L844.8 896.6L847.2 894.4L849.6 896.6L852.0 894.4L854.4 896.6L856.8 894.4L859.2 896.6L861.6 894.4L864.0 896.6L866.4 894.4L868.8 896.6M962.5 896.6L964.9 894.4L967.3 896.6L969.7 894.4L972.1 896.6L974.5 894.4L976.9 896.6L979.3 894.4L981.7 896.6L984.1 894.4L986.5 896.6L988.9 894.4L991.3 896.6L993.7 894.4L996.1 896.6L998.5 894.4L1000.9 896.6L1003.3 894.4L1005.7 896.6L1008.1 894.4M1056.9 896.6L1059.3 894.4L1061.7 896.6L1064.1 894.4L1066.5 896.6L1068.9 894.4L1071.3 896.6L1073.7 894.4L1076.1 896.6L1078.5 894.4L1080.9 896.6L1083.3 894.4L1085.7 896.6L1088.1 894.4L1090.5 896.6L1092.9 894.4L1095.3 896.6L1097.7 894.4L1100.1 896.6L1102.5 894.4L1104.9 896.6L1107.3 894.4L1109.7 896.6L1112.1 894.4L1114.5 896.6L1116.9 894.4L1119.3 896.6L1121.7 894.4L1124.1 896.6L1126.5 894.4L1128.9 896.6M1141.7 896.6L1144.1 894.4L1146.5 896.6L1148.9 894.4L1151.3 896.6L1153.7 894.4L1156.1 896.6L1158.5 894.4L1160.9 896.6L1163.3 894.4L1165.7 896.6L1168.1 894.4L1170.5 896.6L1172.9 894.4L1175.3 896.6L1177.7 894.4L1180.1 896.6L1182.5 894.4L1184.9 896.6L1187.3 894.4L1189.7 896.6L1192.1 894.4L1194.5 896.6L1196.9 894.4L1199.3 896.6L1201.7 894.4L1204.1 896.6L1206.5 894.4L1208.9 896.6L1211.3 894.4L1213.7 896.6" fill="none" stroke="#ff0000" stroke-width="1.25" stroke-linejoin="round"/></svg>
</body></html>
